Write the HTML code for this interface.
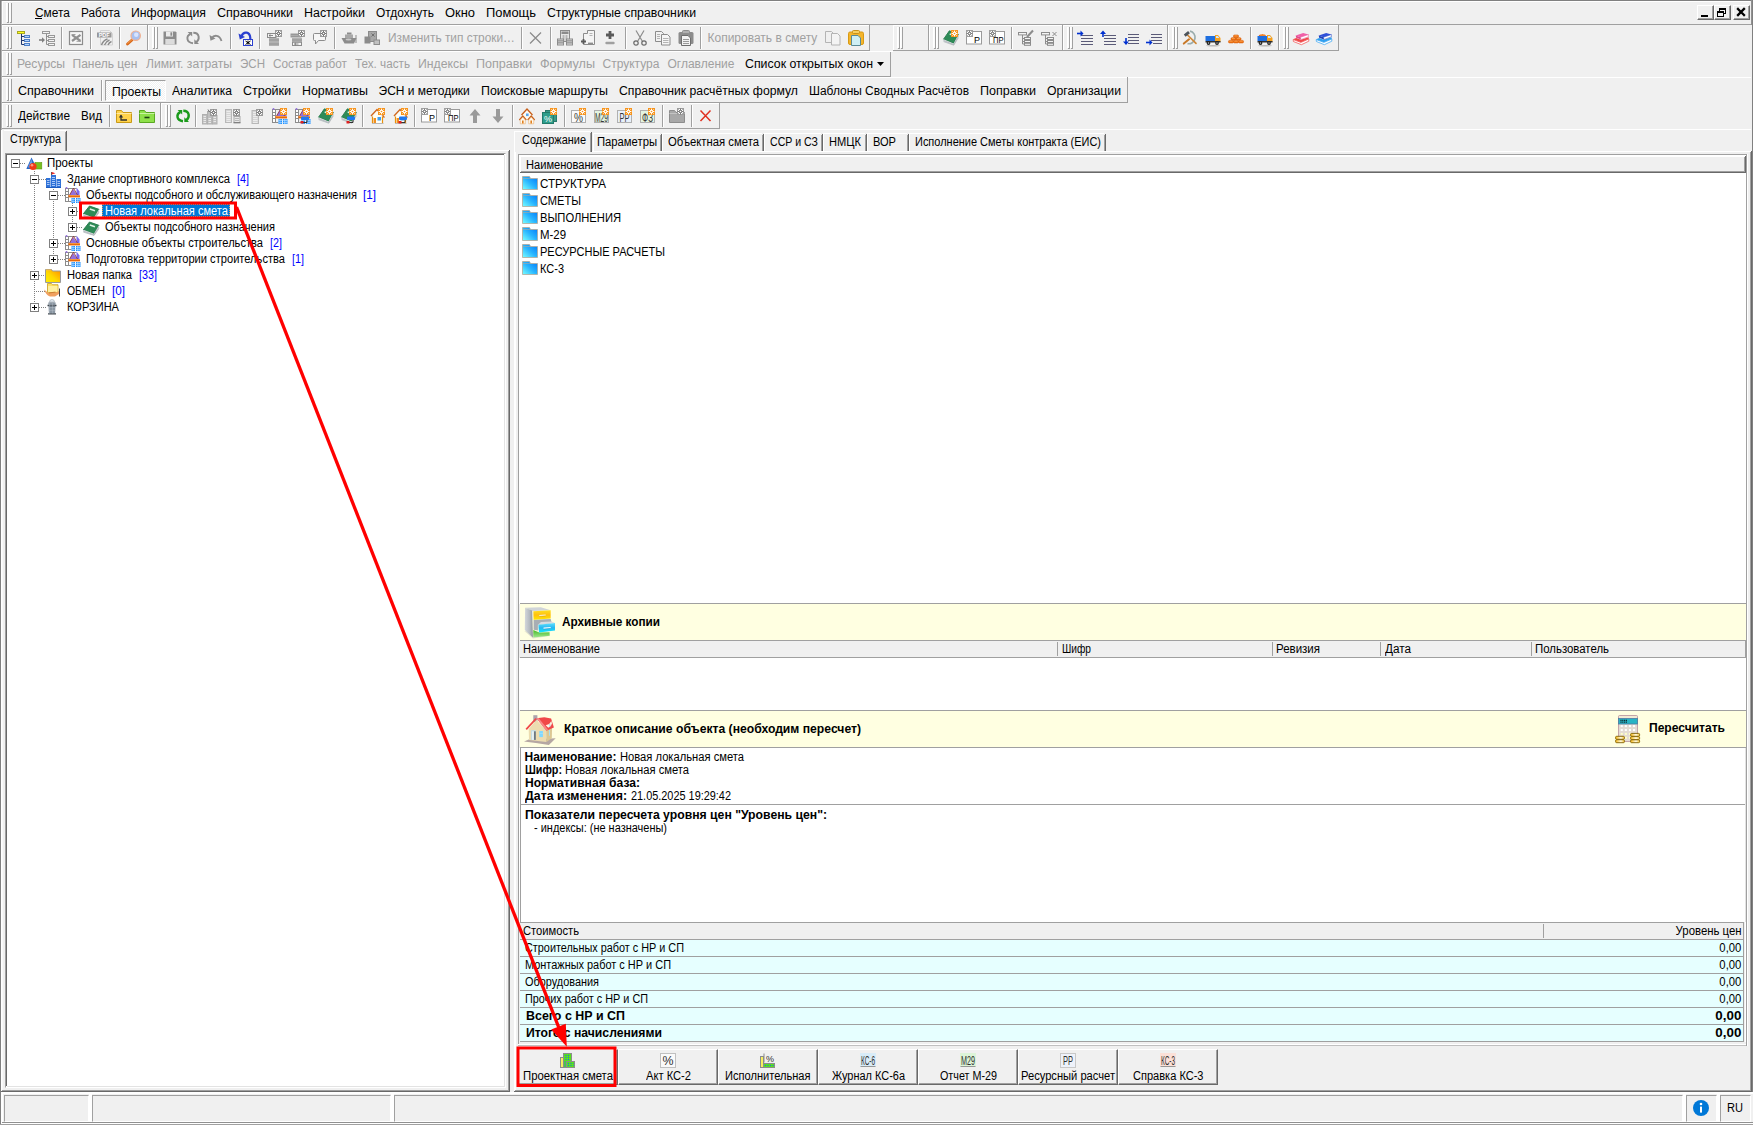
<!DOCTYPE html>
<html lang="ru"><head><meta charset="utf-8"><title>Смета</title><style>
html,body{margin:0;padding:0}
body{width:1753px;height:1125px;overflow:hidden;background:#f0f0f0;position:relative;
 font-family:"Liberation Sans",sans-serif;}
body>div,body>span,body>svg{position:absolute;display:block}
.t{white-space:pre;margin:0;padding:0}
svg{overflow:visible}
</style></head>
<body>
<div style="left:0px;top:0px;width:1px;height:1125px;background:#808080;"></div>
<div style="left:1px;top:0px;width:1px;height:130px;background:#b0b0b0;"></div>
<div style="left:0px;top:0px;width:1753px;height:1px;background:#808080;"></div>
<div style="left:1752px;top:0px;width:1px;height:1092px;background:#808080;"></div>
<div style="left:1751px;top:0px;width:1px;height:25px;background:#909090;"></div>
<div style="left:1750px;top:151px;width:1px;height:941px;background:#a0a0a0;"></div>
<div style="left:1751px;top:151px;width:1px;height:941px;background:#696969;"></div>
<div style="left:2px;top:1px;width:1748px;height:1px;background:#fff;"></div>
<div style="left:2px;top:1px;width:1px;height:23px;background:#fff;"></div>
<div style="left:2px;top:24px;width:1749px;height:1px;background:#a0a0a0;"></div>
<div style="left:1750px;top:1px;width:1px;height:24px;background:#a0a0a0;"></div>
<div style="left:6px;top:3px;width:1px;height:19px;background:#fff;"></div>
<div style="left:7px;top:3px;width:1px;height:19px;background:#fafafa;"></div>
<div style="left:8px;top:3px;width:1px;height:20px;background:#a0a0a0;"></div>
<div style="left:7px;top:22px;width:2px;height:1px;background:#a0a0a0;"></div>
<div style="left:9px;top:3px;width:1px;height:19px;background:#fff;"></div>
<div style="left:10px;top:3px;width:1px;height:19px;background:#fafafa;"></div>
<div style="left:11px;top:3px;width:1px;height:20px;background:#a0a0a0;"></div>
<div style="left:10px;top:22px;width:2px;height:1px;background:#a0a0a0;"></div>
<div style="left:1750px;top:1px;width:1px;height:23px;background:#f0f0f0;"></div>
<span id="t0" class="t " style="top:1.0px;font-size:12px;line-height:24px;height:24px;left:34.5px;transform-origin:0 0;transform:scaleX(0.9933);">Смета</span>
<span id="t1" class="t " style="top:1.0px;font-size:12px;line-height:24px;height:24px;left:80.5px;transform-origin:0 0;transform:scaleX(0.9846);">Работа</span>
<span id="t2" class="t " style="top:1.0px;font-size:12px;line-height:24px;height:24px;left:130.5px;transform-origin:0 0;transform:scaleX(1.0206);">Информация</span>
<span id="t3" class="t " style="top:1.0px;font-size:12px;line-height:24px;height:24px;left:216.5px;transform-origin:0 0;transform:scaleX(1.0453);">Справочники</span>
<span id="t4" class="t " style="top:1.0px;font-size:12px;line-height:24px;height:24px;left:303.5px;transform-origin:0 0;transform:scaleX(1.0366);">Настройки</span>
<span id="t5" class="t " style="top:1.0px;font-size:12px;line-height:24px;height:24px;left:375.5px;transform-origin:0 0;transform:scaleX(0.9938);">Отдохнуть</span>
<span id="t6" class="t " style="top:1.0px;font-size:12px;line-height:24px;height:24px;left:444.5px;transform-origin:0 0;transform:scaleX(1.0756);">Окно</span>
<span id="t7" class="t " style="top:1.0px;font-size:12px;line-height:24px;height:24px;left:485.5px;transform-origin:0 0;transform:scaleX(1.0785);">Помощь</span>
<span id="t8" class="t " style="top:1.0px;font-size:12px;line-height:24px;height:24px;left:546.5px;transform-origin:0 0;transform:scaleX(1.0237);">Структурные справочники</span>
<div style="left:35px;top:18px;width:7px;height:1px;background:#000;"></div>
<div style="left:1697px;top:5px;width:17px;height:15px;background:#f0f0f0;border-top:1px solid #fff;border-left:1px solid #fff;border-right:1px solid #696969;border-bottom:1px solid #696969;box-sizing:border-box;"></div>
<div style="left:1712px;top:6px;width:1px;height:13px;background:#a0a0a0;"></div>
<div style="left:1698px;top:18px;width:15px;height:1px;background:#a0a0a0;"></div>
<div style="left:1701px;top:15px;width:7px;height:2px;background:#000;"></div>
<div style="left:1714px;top:5px;width:17px;height:15px;background:#f0f0f0;border-top:1px solid #fff;border-left:1px solid #fff;border-right:1px solid #696969;border-bottom:1px solid #696969;box-sizing:border-box;"></div>
<div style="left:1729px;top:6px;width:1px;height:13px;background:#a0a0a0;"></div>
<div style="left:1715px;top:18px;width:15px;height:1px;background:#a0a0a0;"></div>
<svg style="left:1714px;top:5px" width="16" height="15" viewBox="0 0 16 15"><g shape-rendering="crispEdges"><rect x="5" y="3" width="7" height="2" fill="#000"/><rect x="5" y="5" width="1" height="1" fill="#000"/><rect x="11" y="5" width="1" height="4" fill="#000"/><rect x="10" y="8" width="1" height="1" fill="#000"/><rect x="3" y="6" width="7" height="2" fill="#000"/><rect x="3" y="8" width="1" height="4" fill="#000"/><rect x="9" y="8" width="1" height="4" fill="#000"/><rect x="3" y="11" width="7" height="1" fill="#000"/></g></svg>
<div style="left:1733px;top:5px;width:17px;height:15px;background:#f0f0f0;border-top:1px solid #fff;border-left:1px solid #fff;border-right:1px solid #696969;border-bottom:1px solid #696969;box-sizing:border-box;"></div>
<div style="left:1748px;top:6px;width:1px;height:13px;background:#a0a0a0;"></div>
<div style="left:1734px;top:18px;width:15px;height:1px;background:#a0a0a0;"></div>
<svg style="left:1733px;top:5px" width="16" height="15" viewBox="0 0 16 15"><path d="M5 4l6 6M11 4l-6 6" stroke="#000" stroke-width="2.300" stroke-linecap="square"/></svg>
<div style="left:2px;top:25px;width:145px;height:1px;background:#fff;"></div>
<div style="left:2px;top:25px;width:1px;height:25px;background:#fff;"></div>
<div style="left:2px;top:50px;width:146px;height:1px;background:#a0a0a0;"></div>
<div style="left:147px;top:25px;width:1px;height:26px;background:#a0a0a0;"></div>
<div style="left:6px;top:27px;width:1px;height:21px;background:#fff;"></div>
<div style="left:7px;top:27px;width:1px;height:21px;background:#fafafa;"></div>
<div style="left:8px;top:27px;width:1px;height:22px;background:#a0a0a0;"></div>
<div style="left:7px;top:48px;width:2px;height:1px;background:#a0a0a0;"></div>
<div style="left:9px;top:27px;width:1px;height:21px;background:#fff;"></div>
<div style="left:10px;top:27px;width:1px;height:21px;background:#fafafa;"></div>
<div style="left:11px;top:27px;width:1px;height:22px;background:#a0a0a0;"></div>
<div style="left:10px;top:48px;width:2px;height:1px;background:#a0a0a0;"></div>
<div style="left:148px;top:25px;width:721px;height:1px;background:#fff;"></div>
<div style="left:148px;top:25px;width:1px;height:25px;background:#fff;"></div>
<div style="left:148px;top:50px;width:722px;height:1px;background:#a0a0a0;"></div>
<div style="left:869px;top:25px;width:1px;height:26px;background:#a0a0a0;"></div>
<div style="left:152px;top:27px;width:1px;height:21px;background:#fff;"></div>
<div style="left:153px;top:27px;width:1px;height:21px;background:#fafafa;"></div>
<div style="left:154px;top:27px;width:1px;height:22px;background:#a0a0a0;"></div>
<div style="left:153px;top:48px;width:2px;height:1px;background:#a0a0a0;"></div>
<div style="left:155px;top:27px;width:1px;height:21px;background:#fff;"></div>
<div style="left:156px;top:27px;width:1px;height:21px;background:#fafafa;"></div>
<div style="left:157px;top:27px;width:1px;height:22px;background:#a0a0a0;"></div>
<div style="left:156px;top:48px;width:2px;height:1px;background:#a0a0a0;"></div>
<div style="left:893px;top:25px;width:35px;height:1px;background:#fff;"></div>
<div style="left:893px;top:25px;width:1px;height:25px;background:#fff;"></div>
<div style="left:893px;top:50px;width:36px;height:1px;background:#a0a0a0;"></div>
<div style="left:928px;top:25px;width:1px;height:26px;background:#a0a0a0;"></div>
<div style="left:897px;top:27px;width:1px;height:21px;background:#fff;"></div>
<div style="left:898px;top:27px;width:1px;height:21px;background:#fafafa;"></div>
<div style="left:899px;top:27px;width:1px;height:22px;background:#a0a0a0;"></div>
<div style="left:898px;top:48px;width:2px;height:1px;background:#a0a0a0;"></div>
<div style="left:900px;top:27px;width:1px;height:21px;background:#fff;"></div>
<div style="left:901px;top:27px;width:1px;height:21px;background:#fafafa;"></div>
<div style="left:902px;top:27px;width:1px;height:22px;background:#a0a0a0;"></div>
<div style="left:901px;top:48px;width:2px;height:1px;background:#a0a0a0;"></div>
<div style="left:929px;top:25px;width:133px;height:1px;background:#fff;"></div>
<div style="left:929px;top:25px;width:1px;height:25px;background:#fff;"></div>
<div style="left:929px;top:50px;width:134px;height:1px;background:#a0a0a0;"></div>
<div style="left:1062px;top:25px;width:1px;height:26px;background:#a0a0a0;"></div>
<div style="left:933px;top:27px;width:1px;height:21px;background:#fff;"></div>
<div style="left:934px;top:27px;width:1px;height:21px;background:#fafafa;"></div>
<div style="left:935px;top:27px;width:1px;height:22px;background:#a0a0a0;"></div>
<div style="left:934px;top:48px;width:2px;height:1px;background:#a0a0a0;"></div>
<div style="left:936px;top:27px;width:1px;height:21px;background:#fff;"></div>
<div style="left:937px;top:27px;width:1px;height:21px;background:#fafafa;"></div>
<div style="left:938px;top:27px;width:1px;height:22px;background:#a0a0a0;"></div>
<div style="left:937px;top:48px;width:2px;height:1px;background:#a0a0a0;"></div>
<div style="left:1063px;top:25px;width:104px;height:1px;background:#fff;"></div>
<div style="left:1063px;top:25px;width:1px;height:25px;background:#fff;"></div>
<div style="left:1063px;top:50px;width:105px;height:1px;background:#a0a0a0;"></div>
<div style="left:1167px;top:25px;width:1px;height:26px;background:#a0a0a0;"></div>
<div style="left:1067px;top:27px;width:1px;height:21px;background:#fff;"></div>
<div style="left:1068px;top:27px;width:1px;height:21px;background:#fafafa;"></div>
<div style="left:1069px;top:27px;width:1px;height:22px;background:#a0a0a0;"></div>
<div style="left:1068px;top:48px;width:2px;height:1px;background:#a0a0a0;"></div>
<div style="left:1070px;top:27px;width:1px;height:21px;background:#fff;"></div>
<div style="left:1071px;top:27px;width:1px;height:21px;background:#fafafa;"></div>
<div style="left:1072px;top:27px;width:1px;height:22px;background:#a0a0a0;"></div>
<div style="left:1071px;top:48px;width:2px;height:1px;background:#a0a0a0;"></div>
<div style="left:1168px;top:25px;width:110px;height:1px;background:#fff;"></div>
<div style="left:1168px;top:25px;width:1px;height:25px;background:#fff;"></div>
<div style="left:1168px;top:50px;width:111px;height:1px;background:#a0a0a0;"></div>
<div style="left:1278px;top:25px;width:1px;height:26px;background:#a0a0a0;"></div>
<div style="left:1172px;top:27px;width:1px;height:21px;background:#fff;"></div>
<div style="left:1173px;top:27px;width:1px;height:21px;background:#fafafa;"></div>
<div style="left:1174px;top:27px;width:1px;height:22px;background:#a0a0a0;"></div>
<div style="left:1173px;top:48px;width:2px;height:1px;background:#a0a0a0;"></div>
<div style="left:1175px;top:27px;width:1px;height:21px;background:#fff;"></div>
<div style="left:1176px;top:27px;width:1px;height:21px;background:#fafafa;"></div>
<div style="left:1177px;top:27px;width:1px;height:22px;background:#a0a0a0;"></div>
<div style="left:1176px;top:48px;width:2px;height:1px;background:#a0a0a0;"></div>
<div style="left:1279px;top:25px;width:59px;height:1px;background:#fff;"></div>
<div style="left:1279px;top:25px;width:1px;height:25px;background:#fff;"></div>
<div style="left:1279px;top:50px;width:60px;height:1px;background:#a0a0a0;"></div>
<div style="left:1338px;top:25px;width:1px;height:26px;background:#a0a0a0;"></div>
<div style="left:1283px;top:27px;width:1px;height:21px;background:#fff;"></div>
<div style="left:1284px;top:27px;width:1px;height:21px;background:#fafafa;"></div>
<div style="left:1285px;top:27px;width:1px;height:22px;background:#a0a0a0;"></div>
<div style="left:1284px;top:48px;width:2px;height:1px;background:#a0a0a0;"></div>
<div style="left:1286px;top:27px;width:1px;height:21px;background:#fff;"></div>
<div style="left:1287px;top:27px;width:1px;height:21px;background:#fafafa;"></div>
<div style="left:1288px;top:27px;width:1px;height:22px;background:#a0a0a0;"></div>
<div style="left:1287px;top:48px;width:2px;height:1px;background:#a0a0a0;"></div>
<div style="left:61px;top:27px;width:1px;height:22px;background:#a0a0a0;"></div>
<div style="left:62px;top:27px;width:1px;height:22px;background:#fff;"></div>
<div style="left:90px;top:27px;width:1px;height:22px;background:#a0a0a0;"></div>
<div style="left:91px;top:27px;width:1px;height:22px;background:#fff;"></div>
<div style="left:119px;top:27px;width:1px;height:22px;background:#a0a0a0;"></div>
<div style="left:120px;top:27px;width:1px;height:22px;background:#fff;"></div>
<div style="left:230px;top:27px;width:1px;height:22px;background:#a0a0a0;"></div>
<div style="left:231px;top:27px;width:1px;height:22px;background:#fff;"></div>
<div style="left:259px;top:27px;width:1px;height:22px;background:#a0a0a0;"></div>
<div style="left:260px;top:27px;width:1px;height:22px;background:#fff;"></div>
<div style="left:334px;top:27px;width:1px;height:22px;background:#a0a0a0;"></div>
<div style="left:335px;top:27px;width:1px;height:22px;background:#fff;"></div>
<div style="left:521px;top:27px;width:1px;height:22px;background:#a0a0a0;"></div>
<div style="left:522px;top:27px;width:1px;height:22px;background:#fff;"></div>
<div style="left:550px;top:27px;width:1px;height:22px;background:#a0a0a0;"></div>
<div style="left:551px;top:27px;width:1px;height:22px;background:#fff;"></div>
<div style="left:625px;top:27px;width:1px;height:22px;background:#a0a0a0;"></div>
<div style="left:626px;top:27px;width:1px;height:22px;background:#fff;"></div>
<div style="left:700px;top:27px;width:1px;height:22px;background:#a0a0a0;"></div>
<div style="left:701px;top:27px;width:1px;height:22px;background:#fff;"></div>
<div style="left:1011px;top:27px;width:1px;height:22px;background:#a0a0a0;"></div>
<div style="left:1012px;top:27px;width:1px;height:22px;background:#fff;"></div>
<div style="left:1250px;top:27px;width:1px;height:22px;background:#a0a0a0;"></div>
<div style="left:1251px;top:27px;width:1px;height:22px;background:#fff;"></div>
<span id="t9" class="t " style="top:26.0px;font-size:12px;line-height:24px;height:24px;color:#a0a0a0;left:387.5px;transform-origin:0 0;transform:scaleX(0.9899);">Изменить тип строки…</span>
<span id="t10" class="t " style="top:26.0px;font-size:12px;line-height:24px;height:24px;color:#a0a0a0;left:707.5px;transform-origin:0 0;">Копировать в смету</span>
<div style="left:2px;top:51px;width:888px;height:1px;background:#fff;"></div>
<div style="left:2px;top:51px;width:1px;height:25px;background:#fff;"></div>
<div style="left:2px;top:76px;width:889px;height:1px;background:#a0a0a0;"></div>
<div style="left:890px;top:51px;width:1px;height:26px;background:#a0a0a0;"></div>
<div style="left:6px;top:53px;width:1px;height:21px;background:#fff;"></div>
<div style="left:7px;top:53px;width:1px;height:21px;background:#fafafa;"></div>
<div style="left:8px;top:53px;width:1px;height:22px;background:#a0a0a0;"></div>
<div style="left:7px;top:74px;width:2px;height:1px;background:#a0a0a0;"></div>
<div style="left:9px;top:53px;width:1px;height:21px;background:#fff;"></div>
<div style="left:10px;top:53px;width:1px;height:21px;background:#fafafa;"></div>
<div style="left:11px;top:53px;width:1px;height:22px;background:#a0a0a0;"></div>
<div style="left:10px;top:74px;width:2px;height:1px;background:#a0a0a0;"></div>
<div style="left:870px;top:51px;width:23px;height:1px;background:#fff;"></div>
<span id="t11" class="t " style="top:52.0px;font-size:12px;line-height:24px;height:24px;color:#a0a0a0;left:16.5px;transform-origin:0 0;transform:scaleX(1.0142);">Ресурсы</span>
<span id="t12" class="t " style="top:52.0px;font-size:12px;line-height:24px;height:24px;color:#a0a0a0;left:72.5px;transform-origin:0 0;">Панель цен</span>
<span id="t13" class="t " style="top:52.0px;font-size:12px;line-height:24px;height:24px;color:#a0a0a0;left:145.5px;transform-origin:0 0;transform:scaleX(1.0120);">Лимит. затраты</span>
<span id="t14" class="t " style="top:52.0px;font-size:12px;line-height:24px;height:24px;color:#a0a0a0;left:239.5px;transform-origin:0 0;transform:scaleX(0.9627);">ЭСН</span>
<span id="t15" class="t " style="top:52.0px;font-size:12px;line-height:24px;height:24px;color:#a0a0a0;left:272.5px;transform-origin:0 0;transform:scaleX(0.9838);">Состав работ</span>
<span id="t16" class="t " style="top:52.0px;font-size:12px;line-height:24px;height:24px;color:#a0a0a0;left:354.5px;transform-origin:0 0;transform:scaleX(0.9748);">Тех. часть</span>
<span id="t17" class="t " style="top:52.0px;font-size:12px;line-height:24px;height:24px;color:#a0a0a0;left:417.5px;transform-origin:0 0;transform:scaleX(1.0217);">Индексы</span>
<span id="t18" class="t " style="top:52.0px;font-size:12px;line-height:24px;height:24px;color:#a0a0a0;left:475.5px;transform-origin:0 0;transform:scaleX(1.0470);">Поправки</span>
<span id="t19" class="t " style="top:52.0px;font-size:12px;line-height:24px;height:24px;color:#a0a0a0;left:539.5px;transform-origin:0 0;transform:scaleX(1.0533);">Формулы</span>
<span id="t20" class="t " style="top:52.0px;font-size:12px;line-height:24px;height:24px;color:#a0a0a0;left:602.5px;transform-origin:0 0;">Структура</span>
<span id="t21" class="t " style="top:52.0px;font-size:12px;line-height:24px;height:24px;color:#a0a0a0;left:667.5px;transform-origin:0 0;">Оглавление</span>
<span id="t22" class="t " style="top:52.0px;font-size:12px;line-height:24px;height:24px;left:744.5px;transform-origin:0 0;transform:scaleX(1.0279);">Список открытых окон</span>
<svg style="left:877px;top:62px" width="7" height="4" viewBox="0 0 7 4"><path d="M0 0h7l-3.5 4z" fill="#000"/></svg>
<div style="left:2px;top:77px;width:1125px;height:1px;background:#fff;"></div>
<div style="left:2px;top:77px;width:1px;height:25px;background:#fff;"></div>
<div style="left:2px;top:102px;width:1126px;height:1px;background:#a0a0a0;"></div>
<div style="left:1127px;top:77px;width:1px;height:26px;background:#a0a0a0;"></div>
<div style="left:6px;top:79px;width:1px;height:21px;background:#fff;"></div>
<div style="left:7px;top:79px;width:1px;height:21px;background:#fafafa;"></div>
<div style="left:8px;top:79px;width:1px;height:22px;background:#a0a0a0;"></div>
<div style="left:7px;top:100px;width:2px;height:1px;background:#a0a0a0;"></div>
<div style="left:9px;top:79px;width:1px;height:21px;background:#fff;"></div>
<div style="left:10px;top:79px;width:1px;height:21px;background:#fafafa;"></div>
<div style="left:11px;top:79px;width:1px;height:22px;background:#a0a0a0;"></div>
<div style="left:10px;top:100px;width:2px;height:1px;background:#a0a0a0;"></div>
<div style="left:1128px;top:77px;width:623px;height:1px;background:#fff;"></div>
<span id="t23" class="t " style="top:79.0px;font-size:12px;line-height:24px;height:24px;left:17.5px;transform-origin:0 0;transform:scaleX(1.0453);">Справочники</span>
<div style="left:101px;top:80px;width:1px;height:21px;background:#a0a0a0;"></div>
<div style="left:102px;top:80px;width:1px;height:21px;background:#fff;"></div>
<div style="left:105px;top:80px;width:61px;height:21px;background:repeating-conic-gradient(#fff 0 25%,#f0f0f0 0 50%) 0 0/2px 2px;border-top:1px solid #a0a0a0;border-left:1px solid #a0a0a0;border-right:1px solid #fff;border-bottom:1px solid #fff;box-sizing:border-box;"></div>
<span id="t24" class="t " style="top:80.0px;font-size:12px;line-height:24px;height:24px;left:111.5px;transform-origin:0 0;transform:scaleX(1.0175);">Проекты</span>
<span id="t25" class="t " style="top:79.0px;font-size:12px;line-height:24px;height:24px;left:171.5px;transform-origin:0 0;transform:scaleX(1.0100);">Аналитика</span>
<span id="t26" class="t " style="top:79.0px;font-size:12px;line-height:24px;height:24px;left:242.5px;transform-origin:0 0;transform:scaleX(1.0396);">Стройки</span>
<span id="t27" class="t " style="top:79.0px;font-size:12px;line-height:24px;height:24px;left:301.5px;transform-origin:0 0;transform:scaleX(1.0333);">Нормативы</span>
<span id="t28" class="t " style="top:79.0px;font-size:12px;line-height:24px;height:24px;left:378.5px;transform-origin:0 0;">ЭСН и методики</span>
<span id="t29" class="t " style="top:79.0px;font-size:12px;line-height:24px;height:24px;left:480.5px;transform-origin:0 0;transform:scaleX(1.0329);">Поисковые маршруты</span>
<span id="t30" class="t " style="top:79.0px;font-size:12px;line-height:24px;height:24px;left:618.5px;transform-origin:0 0;transform:scaleX(1.0176);">Справочник расчётных формул</span>
<span id="t31" class="t " style="top:79.0px;font-size:12px;line-height:24px;height:24px;left:808.5px;transform-origin:0 0;transform:scaleX(0.9950);">Шаблоны Сводных Расчётов</span>
<span id="t32" class="t " style="top:79.0px;font-size:12px;line-height:24px;height:24px;left:979.5px;transform-origin:0 0;transform:scaleX(1.0470);">Поправки</span>
<span id="t33" class="t " style="top:79.0px;font-size:12px;line-height:24px;height:24px;left:1046.5px;transform-origin:0 0;transform:scaleX(1.0194);">Организации</span>
<div style="left:2px;top:103px;width:158px;height:1px;background:#fff;"></div>
<div style="left:2px;top:103px;width:1px;height:25px;background:#fff;"></div>
<div style="left:2px;top:128px;width:159px;height:1px;background:#a0a0a0;"></div>
<div style="left:160px;top:103px;width:1px;height:26px;background:#a0a0a0;"></div>
<div style="left:6px;top:105px;width:1px;height:21px;background:#fff;"></div>
<div style="left:7px;top:105px;width:1px;height:21px;background:#fafafa;"></div>
<div style="left:8px;top:105px;width:1px;height:22px;background:#a0a0a0;"></div>
<div style="left:7px;top:126px;width:2px;height:1px;background:#a0a0a0;"></div>
<div style="left:9px;top:105px;width:1px;height:21px;background:#fff;"></div>
<div style="left:10px;top:105px;width:1px;height:21px;background:#fafafa;"></div>
<div style="left:11px;top:105px;width:1px;height:22px;background:#a0a0a0;"></div>
<div style="left:10px;top:126px;width:2px;height:1px;background:#a0a0a0;"></div>
<div style="left:161px;top:103px;width:558px;height:1px;background:#fff;"></div>
<div style="left:161px;top:103px;width:1px;height:25px;background:#fff;"></div>
<div style="left:161px;top:128px;width:559px;height:1px;background:#a0a0a0;"></div>
<div style="left:719px;top:103px;width:1px;height:26px;background:#a0a0a0;"></div>
<div style="left:165px;top:105px;width:1px;height:21px;background:#fff;"></div>
<div style="left:166px;top:105px;width:1px;height:21px;background:#fafafa;"></div>
<div style="left:167px;top:105px;width:1px;height:22px;background:#a0a0a0;"></div>
<div style="left:166px;top:126px;width:2px;height:1px;background:#a0a0a0;"></div>
<div style="left:168px;top:105px;width:1px;height:21px;background:#fff;"></div>
<div style="left:169px;top:105px;width:1px;height:21px;background:#fafafa;"></div>
<div style="left:170px;top:105px;width:1px;height:22px;background:#a0a0a0;"></div>
<div style="left:169px;top:126px;width:2px;height:1px;background:#a0a0a0;"></div>
<div style="left:720px;top:129px;width:1031px;height:1px;background:#fff;"></div>
<span id="t34" class="t " style="top:104.0px;font-size:12px;line-height:24px;height:24px;left:17.5px;transform-origin:0 0;transform:scaleX(0.9855);">Действие</span>
<span id="t35" class="t " style="top:104.0px;font-size:12px;line-height:24px;height:24px;left:80.5px;transform-origin:0 0;transform:scaleX(0.9669);">Вид</span>
<div style="left:109px;top:105px;width:1px;height:22px;background:#a0a0a0;"></div>
<div style="left:110px;top:105px;width:1px;height:22px;background:#fff;"></div>
<div style="left:195px;top:105px;width:1px;height:22px;background:#a0a0a0;"></div>
<div style="left:196px;top:105px;width:1px;height:22px;background:#fff;"></div>
<div style="left:362px;top:105px;width:1px;height:22px;background:#a0a0a0;"></div>
<div style="left:363px;top:105px;width:1px;height:22px;background:#fff;"></div>
<div style="left:414px;top:105px;width:1px;height:22px;background:#a0a0a0;"></div>
<div style="left:415px;top:105px;width:1px;height:22px;background:#fff;"></div>
<div style="left:512px;top:105px;width:1px;height:22px;background:#a0a0a0;"></div>
<div style="left:513px;top:105px;width:1px;height:22px;background:#fff;"></div>
<div style="left:564px;top:105px;width:1px;height:22px;background:#a0a0a0;"></div>
<div style="left:565px;top:105px;width:1px;height:22px;background:#fff;"></div>
<div style="left:662px;top:105px;width:1px;height:22px;background:#a0a0a0;"></div>
<div style="left:663px;top:105px;width:1px;height:22px;background:#fff;"></div>
<div style="left:691px;top:105px;width:1px;height:22px;background:#a0a0a0;"></div>
<div style="left:692px;top:105px;width:1px;height:22px;background:#fff;"></div>
<svg style="left:17px;top:30px" width="16" height="16" viewBox="0 0 16 16"><path d="M4.500 4v10.500h3M4.500 6.500h3M4.500 10.500h3" fill="none" stroke="#203870"/><rect x="0.500" y="1.500" width="7" height="2" fill="#ffff20" stroke="#a8a820"/><g fill="#b0d4ff" stroke="#5080c8"><rect x="7.500" y="5.500" width="5" height="2"/><rect x="7.500" y="9.500" width="5" height="2"/><rect x="7.500" y="13.500" width="5" height="2"/></g></svg>
<svg style="left:39px;top:30px" width="16" height="16" viewBox="0 0 16 16"><path d="M7.500 4v10.500h2M7.500 6.500h2M7.500 10.500h2" fill="none" stroke="#909090"/><g fill="#f4f4f4" stroke="#989898"><rect x="3.500" y="1.500" width="7" height="2"/><rect x="9.500" y="5.500" width="6" height="2"/><rect x="9.500" y="9.500" width="6" height="2"/><rect x="9.500" y="13.500" width="6" height="2"/></g><path d="M0 10h3.500" stroke="#808080" stroke-width="1.600"/><path d="M3 7.300l3 2.700-3 2.700z" fill="#808080"/></svg>
<svg style="left:68px;top:30px" width="16" height="16" viewBox="0 0 16 16"><rect x="1.500" y="1.500" width="13" height="13" fill="#f6f6f6" stroke="#8c8c8c" stroke-width="1.200"/><path d="M4 4.800l8.500 6.200M12.500 4.800L4 11" stroke="#909090" stroke-width="2.200"/><path d="M3.500 4.500h4M8.500 11.300h4.500" stroke="#a0a0a0" stroke-width="1"/></svg>
<svg style="left:97px;top:30px" width="16" height="16" viewBox="0 0 16 16"><path d="M3.500 0.500h9l3 3v11.500h-12z" fill="#f0f0f0" stroke="#d4d4d4"/><rect x="0" y="2.500" width="14.500" height="5" fill="#989898"/><text x="7.200" y="7" font-size="5.500" font-weight="bold" font-family="Liberation Sans,sans-serif" fill="#fff" text-anchor="middle" textLength="11" lengthAdjust="spacingAndGlyphs">PDF</text><path d="M4.500 15c1-3 3-5 6-6M7.500 15c1-2.500 2.500-4 5-5M11 15c.600-1.600 1.600-2.800 3.500-3.500" stroke="#8a8a8a" stroke-width="1.400" fill="none"/></svg>
<svg style="left:126px;top:30px" width="16" height="16" viewBox="0 0 16 16"><path d="M6 10L1.500 14" stroke="#d86818" stroke-width="2.800" stroke-linecap="round"/><path d="M6 9.600L1.800 13.300" stroke="#f8a050" stroke-width=".900" stroke-linecap="round"/><circle cx="9.700" cy="5.700" r="4.700" fill="#a8c0f0" stroke="#f0b090" stroke-width="1.200"/><circle cx="10.200" cy="4.800" r="2.200" fill="#d8e4ff"/></svg>
<svg style="left:162px;top:30px" width="16" height="16" viewBox="0 0 16 16"><path d="M1.5 1.5h12l1 1v12h-13z" fill="#8c8c8c"/><rect x="4" y="1.5" width="7" height="5" fill="#ececec"/><rect x="8.4" y="2.3" width="1.8" height="3.4" fill="#8c8c8c"/><rect x="3.3" y="9" width="9.4" height="5.5" fill="#dcdcdc"/></svg>
<svg style="left:185px;top:30px" width="16" height="16" viewBox="0 0 16 16"><path d="M5.300 4.200C1.200 6 1 12.300 8 13.200" fill="none" stroke="#8c8c8c" stroke-width="1.9"/><path d="M8.300 2.800C14.800 2.800 15 9.500 11.300 12.300" fill="none" stroke="#8c8c8c" stroke-width="1.9"/><path d="M2.600 2h4.600v4.600z" fill="#8c8c8c"/><path d="M9.300 9.300v4.700h4.700z" fill="#8c8c8c"/></svg>
<svg style="left:208px;top:30px" width="16" height="16" viewBox="0 0 16 16"><path d="M3.5 8.5C6 4.5 11.5 4.5 13.5 11" fill="none" stroke="#8c8c8c" stroke-width="1.8"/><path d="M1.5 5l1 5.8 5-2.4z" fill="#8c8c8c"/></svg>
<svg style="left:238px;top:30px" width="16" height="16" viewBox="0 0 16 16"><path d="M3.5 6C6 0.5 12 2 12.3 8v1.5" fill="none" stroke="#2a3fd0" stroke-width="2.2"/><path d="M0.5 3.5l1.3 6L7 7z" fill="#2a3fd0"/><rect x="5.5" y="9.5" width="9" height="6" fill="#fff" stroke="#2a3fd0"/><path d="M7.5 11l5 3.5M12.5 11l-5 3.5M10 10.6v4" stroke="#000" stroke-width="1"/></svg>
<svg style="left:267px;top:30px" width="16" height="16" viewBox="0 0 16 16"><rect x="0.500" y="3.500" width="8.500" height="4" fill="#f4f4f4" stroke="#8c8c8c"/><path d="M2 5.500h4M3.500 4.300l-1.500 1.200 1.500 1.200" stroke="#707070" stroke-width=".800" fill="none"/><rect x="2" y="8.300" width="10" height="3.400" fill="#989898"/><rect x="2" y="12.300" width="10" height="3.400" fill="#989898"/><path d="M2 10h10M2 14h10" stroke="#b4b4b4" stroke-width=".700"/><rect x="8.5" y="0.5" width="6" height="6" fill="#ffffff" stroke="#9c9c9c" stroke-width="1"/><path d="M12.70 3.50L14.40 3.50M12.35 4.35L13.55 5.55M11.50 4.70L11.50 6.40M10.65 4.35L9.45 5.55M10.30 3.50L8.60 3.50M10.65 2.65L9.45 1.45M11.50 2.30L11.50 0.60M12.35 2.65L13.55 1.45" stroke="#787878" stroke-width="1"/><circle cx="11.5" cy="3.5" r="1.700" fill="#787878"/><circle cx="11.5" cy="3.5" r=".800" fill="#ffffff"/></svg>
<svg style="left:290px;top:30px" width="16" height="16" viewBox="0 0 16 16"><rect x="0.500" y="3.500" width="11" height="4" fill="#989898"/><rect x="2" y="8.300" width="10" height="3.400" fill="#989898"/><path d="M1 5.500h10M2 10h10" stroke="#b4b4b4" stroke-width=".700"/><rect x="2.500" y="12.300" width="9" height="3.200" fill="#f4f4f4" stroke="#8c8c8c"/><path d="M4.500 14h4M6 12.900l-1.500 1.100 1.500 1.100" stroke="#707070" stroke-width=".800" fill="none"/><rect x="8.5" y="0.5" width="6" height="6" fill="#ffffff" stroke="#9c9c9c" stroke-width="1"/><path d="M12.70 3.50L14.40 3.50M12.35 4.35L13.55 5.55M11.50 4.70L11.50 6.40M10.65 4.35L9.45 5.55M10.30 3.50L8.60 3.50M10.65 2.65L9.45 1.45M11.50 2.30L11.50 0.60M12.35 2.65L13.55 1.45" stroke="#787878" stroke-width="1"/><circle cx="11.5" cy="3.5" r="1.700" fill="#787878"/><circle cx="11.5" cy="3.5" r=".800" fill="#ffffff"/></svg>
<svg style="left:312px;top:30px" width="16" height="16" viewBox="0 0 16 16"><path d="M1.5 4.5q0-1 1-1h10q1 0 1 1v5q0 1-1 1h-6l-3 3.5v-3.5h-1q-1 0-1-1z" fill="#f6f6f6" stroke="#8c8c8c"/><rect x="8.5" y="0.5" width="6" height="6" fill="#ffffff" stroke="#9c9c9c" stroke-width="1"/><path d="M12.70 3.50L14.40 3.50M12.35 4.35L13.55 5.55M11.50 4.70L11.50 6.40M10.65 4.35L9.45 5.55M10.30 3.50L8.60 3.50M10.65 2.65L9.45 1.45M11.50 2.30L11.50 0.60M12.35 2.65L13.55 1.45" stroke="#787878" stroke-width="1"/><circle cx="11.5" cy="3.5" r="1.700" fill="#787878"/><circle cx="11.5" cy="3.5" r=".800" fill="#ffffff"/></svg>
<svg style="left:341px;top:30px" width="16" height="16" viewBox="0 0 16 16"><path d="M0.5 8h15l-2.5 5.5h-9.5z" fill="#8c8c8c"/><rect x="4" y="4.5" width="8" height="3.5" fill="#a8a8a8"/><rect x="6" y="2.5" width="4.5" height="2" fill="#8c8c8c"/><path d="M15 5v8" stroke="#8c8c8c"/><ellipse cx="7.5" cy="9.5" rx="3" ry="1" fill="#c8c8c8"/></svg>
<svg style="left:364px;top:30px" width="16" height="16" viewBox="0 0 16 16"><rect x="4.5" y="1.5" width="8" height="10" fill="#a8a8a8" stroke="#8c8c8c"/><rect x="0.5" y="6.5" width="6" height="7" fill="#8c8c8c"/><rect x="10" y="10" width="5.5" height="4.5" fill="#c0c0c0" stroke="#8c8c8c"/><path d="M7.5 3.5l3 3M10.5 3.5l-3 3" stroke="#707070"/></svg>
<svg style="left:528px;top:30px" width="16" height="16" viewBox="0 0 16 16"><path d="M2 2.5l11 11M13 2.5l-11 11" stroke="#8c8c8c" stroke-width="1.3"/></svg>
<svg style="left:557px;top:30px" width="16" height="16" viewBox="0 0 16 16"><rect x="3.5" y="0.5" width="9" height="11" fill="#e6e6e6" stroke="#8c8c8c"/><rect x="4.5" y="1.5" width="7" height="2.5" fill="#8c8c8c"/><path d="M5 6h6M5 8h6M5 10h6M6.5 5v6M9.5 5v6" stroke="#b0b0b0" stroke-width=".8"/><g fill="#e0e0e0" stroke="#8c8c8c"><rect x="0.5" y="9" width="6" height="2"/><rect x="0.5" y="11" width="6" height="2"/><rect x="0.5" y="13" width="6" height="2"/><rect x="9.5" y="9" width="6" height="2"/><rect x="9.5" y="11" width="6" height="2"/><rect x="9.5" y="13" width="6" height="2"/></g></svg>
<svg style="left:580px;top:30px" width="16" height="16" viewBox="0 0 16 16"><path d="M3.500 3.500h4v-3h7v14h-11z" fill="#f4f4f4" stroke="#8c8c8c"/><path d="M9.500 3.5h3M9.500 5.5h3" stroke="#b4b4b4"/><path d="M1 11.500h5M3.500 9v5" stroke="#5a5a5a" stroke-width="1.8"/><path d="M8 13.500h5" stroke="#8c8c8c" stroke-width="1.800"/></svg>
<svg style="left:602px;top:30px" width="16" height="16" viewBox="0 0 16 16"><path d="M8 1v8M4 5h8" stroke="#5a5a5a" stroke-width="2.800"/><path d="M4.500 13h7" stroke="#a0a0a0" stroke-width="2.400" stroke-linecap="round"/></svg>
<svg style="left:632px;top:30px" width="16" height="16" viewBox="0 0 16 16"><path d="M4 0.500l6.500 11M12 0.500L5.500 11.500" stroke="#8c8c8c" stroke-width="1.200" fill="none"/><circle cx="4" cy="13" r="2.200" fill="none" stroke="#6a6a6a" stroke-width="1.200"/><circle cx="12" cy="13" r="2.200" fill="none" stroke="#6a6a6a" stroke-width="1.200"/></svg>
<svg style="left:655px;top:30px" width="16" height="16" viewBox="0 0 16 16"><path d="M0.500 1.500h6l2 2v8h-8z" fill="#f2f2f2" stroke="#8c8c8c"/><path d="M6.500 4.500h6l2.500 2.500v8h-8.500z" fill="#f6f6f6" stroke="#8c8c8c"/><path d="M8 8.500h5.500M8 10.500h5.500M8 12.500h5.500M2 4.500h3M2 6.500h3M2 8.500h3" stroke="#b4b4b4"/></svg>
<svg style="left:678px;top:30px" width="16" height="16" viewBox="0 0 16 16"><rect x="0.500" y="2" width="15" height="12" rx="1.500" fill="#8c8c8c"/><rect x="4.500" y="0.500" width="7" height="3" rx="1" fill="#b0b0b0" stroke="#8c8c8c"/><path d="M3.500 5.500h6.500l2.500 2.500v7.500h-9z" fill="#f2f2f2" stroke="#6e6e6e"/><path d="M5 9.500h6M5 11.500h6M5 13.500h6" stroke="#9a9a9a"/></svg>
<svg style="left:825px;top:30px" width="16" height="16" viewBox="0 0 16 16"><path d="M0.500 1.500h6l2 2v9h-8z" fill="#f0f0f0" stroke="#b4b4b4"/><path d="M6.500 3.500h6l2.500 2.500v9h-8.500z" fill="#f4f4f4" stroke="#b4b4b4"/></svg>
<svg style="left:848px;top:30px" width="16" height="16" viewBox="0 0 16 16"><rect x="0.500" y="2" width="15" height="12.500" rx="1.500" fill="#f4b52c" stroke="#d89a14"/><rect x="4.500" y="0.500" width="7" height="3" rx="1" fill="#f8d060" stroke="#c89018"/><path d="M3.500 5.500h6.500l2.500 2.500v7.500h-9z" fill="#cfeff4" stroke="#5a8a96"/></svg>
<svg style="left:943px;top:30px" width="16" height="16" viewBox="0 0 16 16"><g transform="translate(-0.500,-2.200) scale(1.060,1.200)"><path d="M1 9.5L6.5 2.5L15 5.5L10.5 13z" fill="#2e8b57"/><path d="M1 9.5L6.5 2.5L15 5.5L10.5 13z" fill="none" stroke="#257a4a" stroke-width=".8"/><path d="M6.8 5.2l4.6 1.5" stroke="#dff5e8" stroke-width="1.3"/><path d="M1 9.5l9.5 3.5L15 5.5v2.8l-4.4 6.2L1 11.5z" fill="#d9dde0"/><path d="M1 10.6l9.5 3.4L15 7M1 11.5l9.6 3L15 8.3" stroke="#a9b0b5" stroke-width=".6" fill="none"/></g><rect x="8" y="0" width="7" height="7" fill="#f7941d"/><path d="M12.70 3.50L14.40 3.50M12.35 4.35L13.55 5.55M11.50 4.70L11.50 6.40M10.65 4.35L9.45 5.55M10.30 3.50L8.60 3.50M10.65 2.65L9.45 1.45M11.50 2.30L11.50 0.60M12.35 2.65L13.55 1.45" stroke="#fff" stroke-width="1"/><circle cx="11.5" cy="3.5" r="1.700" fill="#fff"/><circle cx="11.5" cy="3.5" r=".800" fill="#f7941d"/></svg>
<svg style="left:966px;top:30px" width="16" height="16" viewBox="0 0 16 16"><rect x="0.500" y="1.500" width="15" height="12.500" fill="#fff" stroke="#9a9a9a"/><rect x="0.5" y="0.5" width="6" height="6" fill="#ffffff" stroke="#a0a0a0" stroke-width="1"/><path d="M4.70 3.50L6.40 3.50M4.35 4.35L5.55 5.55M3.50 4.70L3.50 6.40M2.65 4.35L1.45 5.55M2.30 3.50L0.60 3.50M2.65 2.65L1.45 1.45M3.50 2.30L3.50 0.60M4.35 2.65L5.55 1.45" stroke="#808080" stroke-width="1"/><circle cx="3.5" cy="3.5" r="1.700" fill="#808080"/><circle cx="3.5" cy="3.5" r=".800" fill="#ffffff"/><text x="11" y="13" font-size="9" text-anchor="middle" font-family="Liberation Sans,sans-serif" fill="#000">Р</text></svg>
<svg style="left:989px;top:30px" width="16" height="16" viewBox="0 0 16 16"><rect x="0.500" y="1.500" width="15" height="12.500" fill="#fff" stroke="#9a9a9a"/><rect x="0.5" y="0.5" width="6" height="6" fill="#ffffff" stroke="#a0a0a0" stroke-width="1"/><path d="M4.70 3.50L6.40 3.50M4.35 4.35L5.55 5.55M3.50 4.70L3.50 6.40M2.65 4.35L1.45 5.55M2.30 3.50L0.60 3.50M2.65 2.65L1.45 1.45M3.50 2.30L3.50 0.60M4.35 2.65L5.55 1.45" stroke="#808080" stroke-width="1"/><circle cx="3.5" cy="3.5" r="1.700" fill="#808080"/><circle cx="3.5" cy="3.5" r=".800" fill="#ffffff"/><text x="4" y="13" font-size="8.500" font-family="Liberation Sans,sans-serif" fill="#000" textLength="10.500" lengthAdjust="spacingAndGlyphs">ПР</text></svg>
<svg style="left:1018px;top:30px" width="16" height="16" viewBox="0 0 16 16"><rect x="0.500" y="2.500" width="8" height="2.400" fill="#f4f4f4" stroke="#8c8c8c"/><path d="M4.500 5v9h2M4.500 8.500h2M4.500 11.500h2" fill="none" stroke="#8c8c8c"/><rect x="6.500" y="7.500" width="6" height="2" fill="#f4f4f4" stroke="#8c8c8c"/><rect x="6.500" y="10.500" width="6" height="2" fill="#f4f4f4" stroke="#8c8c8c"/><rect x="6.500" y="13.300" width="6" height="2" fill="#f4f4f4" stroke="#8c8c8c"/><path d="M9 7L15 0.500" stroke="#8c8c8c" stroke-width="2"/></svg>
<svg style="left:1041px;top:30px" width="16" height="16" viewBox="0 0 16 16"><rect x="0.500" y="2.500" width="8" height="2.400" fill="#f4f4f4" stroke="#8c8c8c"/><path d="M4.500 5v9h2M4.500 8.500h2M4.500 11.500h2" fill="none" stroke="#8c8c8c"/><rect x="6.500" y="7.500" width="6" height="2" fill="#f4f4f4" stroke="#8c8c8c"/><rect x="6.500" y="10.500" width="6" height="2" fill="#f4f4f4" stroke="#8c8c8c"/><rect x="6.500" y="13.300" width="6" height="2" fill="#f4f4f4" stroke="#8c8c8c"/><path d="M11.500 2l4 4M15.500 2l-4 4" stroke="#8c8c8c" stroke-width="1"/></svg>
<svg style="left:1077px;top:30px" width="16" height="16" viewBox="0 0 16 16"><path d="M4 5.500h12M4 8.500h12M4 11.500h12M4 14.500h12" stroke="#5a5a78"/><path d="M0 3.500h5" stroke="#0030d0" stroke-width="1.600"/><path d="M3.500 0.500l3 3-3 3z" fill="#0030d0"/></svg>
<svg style="left:1100px;top:30px" width="16" height="16" viewBox="0 0 16 16"><path d="M4 5.500h12M4 8.500h12M4 11.500h12M4 14.500h12" stroke="#5a5a78"/><path d="M3 2v5" stroke="#0030d0" stroke-width="1.600"/><path d="M0 4l3-3.500 3 3.500z" fill="#0030d0"/></svg>
<svg style="left:1123px;top:30px" width="16" height="16" viewBox="0 0 16 16"><path d="M5 4.500h11M5 7.500h11M5 10.500h11M5 13.500h11" stroke="#5a5a78"/><path d="M3 8v5" stroke="#0030d0" stroke-width="1.600"/><path d="M0 11.500l3 3.500 3-3.500z" fill="#0030d0"/></svg>
<svg style="left:1146px;top:30px" width="16" height="16" viewBox="0 0 16 16"><path d="M5 4.500h11M5 7.500h11M5 10.500h11M7 13.500h9" stroke="#5a5a78"/><path d="M0 12.500h4" stroke="#0030d0" stroke-width="1.600"/><path d="M3.500 9.500l3 3-3 3z" fill="#0030d0"/></svg>
<svg style="left:1182px;top:30px" width="16" height="16" viewBox="0 0 16 16"><path d="M8 1.200A6.300 6.300 0 1 1 5.500 13.600" fill="none" stroke="#9aacac" stroke-width="1.700"/><path d="M7 9.300L1.800 13.600" stroke="#c87828" stroke-width="2" stroke-linecap="round"/><path d="M5 4.500L14 13.300" stroke="#d08838" stroke-width="1.700" stroke-linecap="round"/><path d="M2.700 5.700L7 2.200" stroke="#4c545c" stroke-width="2.800"/></svg>
<svg style="left:1205px;top:30px" width="16" height="16" viewBox="0 0 16 16"><g transform="translate(0,1)"><rect x="0.500" y="5" width="9.500" height="5" fill="#1e6fe0"/><path d="M10 4h3l2.500 3v4h-5.500z" fill="#f4a020"/><path d="M11 5h1.800l1.500 2h-3.300z" fill="#cfe8ff"/><rect x="0.500" y="10" width="15" height="1.500" fill="#303030"/><circle cx="3.500" cy="12" r="1.900" fill="#202020"/><circle cx="12" cy="12" r="1.900" fill="#202020"/><circle cx="3.500" cy="12" r=".700" fill="#c0c0c0"/><circle cx="12" cy="12" r=".700" fill="#c0c0c0"/><ellipse cx="8" cy="14.800" rx="7" ry=".800" fill="#b8b8b8"/></g></svg>
<svg style="left:1228px;top:30px" width="16" height="16" viewBox="0 0 16 16"><g fill="#f07818" stroke="#d85800" stroke-width=".600"><rect x="5.500" y="5" width="5" height="2.500" rx="1"/><rect x="3" y="7.700" width="5" height="2.500" rx="1"/><rect x="8" y="7.700" width="5" height="2.500" rx="1"/><rect x="0.500" y="10.400" width="5" height="2.500" rx="1"/><rect x="5.500" y="10.400" width="5" height="2.500" rx="1"/><rect x="10.500" y="10.400" width="5" height="2.500" rx="1"/></g><path d="M6.500 5.800h3M4 8.500h3M9 8.500h3M1.500 11.200h3M6.500 11.200h3M11.500 11.200h3" stroke="#ffb060" stroke-width=".600"/></svg>
<svg style="left:1257px;top:30px" width="16" height="16" viewBox="0 0 16 16"><g transform="translate(0,1)"><path d="M1.500 5.200q1-2.200 2.500-1.500 1.500-1.500 3 0 1.500-.500 2 1.500z" fill="#e8640c"/><path d="M3 4h5" stroke="#ffb060" stroke-width=".800"/><rect x="0.500" y="5" width="9.500" height="5" fill="#1e6fe0"/><path d="M10 4h3l2.500 3v4h-5.500z" fill="#f4a020"/><path d="M11 5h1.800l1.500 2h-3.300z" fill="#cfe8ff"/><rect x="0.500" y="10" width="15" height="1.500" fill="#303030"/><circle cx="3.500" cy="12" r="1.900" fill="#202020"/><circle cx="12" cy="12" r="1.900" fill="#202020"/><circle cx="3.500" cy="12" r=".700" fill="#c0c0c0"/><circle cx="12" cy="12" r=".700" fill="#c0c0c0"/><ellipse cx="8" cy="14.800" rx="7" ry=".800" fill="#b8b8b8"/></g></svg>
<svg style="left:1293px;top:30px" width="16" height="16" viewBox="0 0 16 16"><path d="M0.200 9.600L7.900 12.400 15.800 9V11.200L8.400 14.700 0.400 11.500z" fill="#fff" stroke="#f04848" stroke-width=".700"/><path d="M0 9.200L3.200 8 7.900 9.800 15.600 7.200 15.800 8.700 7.900 12.200z" fill="#f04848"/><path d="M7.400 7.300L15.400 4.500V6.800L7.900 9.600z" fill="#fff" stroke="#e04888" stroke-width=".500"/><path d="M2.700 5.400L7.400 7.300 7.900 9.600 3.200 7.800z" fill="#e04888"/><path d="M2.700 5.400L10.200 3.100 15.400 4.500 7.400 7.300z" fill="#f060a8"/></svg>
<svg style="left:1316px;top:30px" width="16" height="16" viewBox="0 0 16 16"><path d="M0.200 9.600L7.900 12.400 15.800 9V11.200L8.400 14.700 0.400 11.500z" fill="#fff" stroke="#30a0f0" stroke-width=".700"/><path d="M0 9.200L3.200 8 7.900 9.800 15.600 7.200 15.800 8.700 7.900 12.200z" fill="#30a0f0"/><path d="M7.400 7.300L15.400 4.500V6.800L7.900 9.600z" fill="#fff" stroke="#2040b8" stroke-width=".500"/><path d="M2.700 5.400L7.400 7.300 7.900 9.600 3.200 7.800z" fill="#2040b8"/><path d="M2.700 5.400L10.200 3.100 15.400 4.500 7.400 7.300z" fill="#3050d8"/></svg>
<svg style="left:116px;top:108px" width="16" height="16" viewBox="0 0 16 16"><path d="M0.500 2.500h5l1.500 2h8.500v10h-15z" fill="#ffd24a" stroke="#c89a18"/><path d="M0.500 5.500h15" stroke="#ffe9a0"/><path d="M5 7.500v4.500h6" fill="none" stroke="#303030" stroke-width="1.300"/><path d="M2.800 9.500L5 6.500l2.200 3z" fill="#303030"/></svg>
<svg style="left:139px;top:108px" width="16" height="16" viewBox="0 0 16 16"><path d="M0.500 2.500h5l1.500 2h8.500v10h-15z" fill="#8ee04a" stroke="#5aa822"/><path d="M0.500 5.500h15" stroke="#c8f4a0"/><path d="M5.500 9.500h5" stroke="#204010" stroke-width="1.600"/></svg>
<svg style="left:175px;top:108px" width="16" height="16" viewBox="0 0 16 16"><path d="M5.300 4.200C1.200 6 1 12.300 8 13.200" fill="none" stroke="#1a9a1a" stroke-width="2.4"/><path d="M8.300 2.800C14.800 2.800 15 9.500 11.300 12.300" fill="none" stroke="#1a9a1a" stroke-width="2.4"/><path d="M2.600 2h4.600v4.600z" fill="#1a9a1a"/><path d="M9.300 9.300v4.700h4.700z" fill="#1a9a1a"/></svg>
<svg style="left:202px;top:108px" width="16" height="16" viewBox="0 0 16 16"><g transform="translate(0,1)"><rect x="0.500" y="5.500" width="4.500" height="9.500" fill="#c0c0c0" stroke="#b0b0b0"/><rect x="5.500" y="2.500" width="4.500" height="12.500" fill="#c0c0c0" stroke="#b0b0b0"/><rect x="10.500" y="6.500" width="4.500" height="8.500" fill="#c0c0c0" stroke="#b0b0b0"/><path d="M1.500 7.500h2.500M1.500 9.500h2.500M1.500 11.500h2.500M1.500 13.500h2.500M6.500 9.500h2.500M6.500 11.500h2.500M6.500 13.500h2.500M11.500 8.500h2.500M11.500 10.500h2.500M11.500 12.500h2.500" stroke="#e8e8e8"/><rect x="8.5" y="0.5" width="6" height="6" fill="#ffffff" stroke="#9c9c9c" stroke-width="1"/><path d="M12.70 3.50L14.40 3.50M12.35 4.35L13.55 5.55M11.50 4.70L11.50 6.40M10.65 4.35L9.45 5.55M10.30 3.50L8.60 3.50M10.65 2.65L9.45 1.45M11.50 2.30L11.50 0.60M12.35 2.65L13.55 1.45" stroke="#787878" stroke-width="1"/><circle cx="11.5" cy="3.5" r="1.700" fill="#787878"/><circle cx="11.5" cy="3.5" r=".800" fill="#ffffff"/><path d="M6 0.500l1.500 2.500" stroke="#505050" stroke-width=".800"/></g></svg>
<svg style="left:225px;top:108px" width="16" height="16" viewBox="0 0 16 16"><g transform="translate(0,1)"><rect x="0.500" y="0.500" width="6" height="13" fill="#d4d4d4" stroke="#b8b8b8"/><path d="M1.500 2.500h4M1.500 4.500h4M1.500 6.500h4M1.500 8.500h4M1.500 10.500h4M1.500 12.500h4" stroke="#ececec"/><rect x="9" y="7.500" width="6" height="6" fill="#e8e8e8" stroke="#a8a8a8"/><path d="M10 9.500h4M10 11.500h4" stroke="#b8b8b8"/><path d="M8.500 13.800h7" stroke="#707070" stroke-width="1"/><rect x="8.5" y="0.5" width="6" height="6" fill="#ffffff" stroke="#9c9c9c" stroke-width="1"/><path d="M12.70 3.50L14.40 3.50M12.35 4.35L13.55 5.55M11.50 4.70L11.50 6.40M10.65 4.35L9.45 5.55M10.30 3.50L8.60 3.50M10.65 2.65L9.45 1.45M11.50 2.30L11.50 0.60M12.35 2.65L13.55 1.45" stroke="#787878" stroke-width="1"/><circle cx="11.5" cy="3.5" r="1.700" fill="#787878"/><circle cx="11.5" cy="3.5" r=".800" fill="#ffffff"/></g></svg>
<svg style="left:248px;top:108px" width="16" height="16" viewBox="0 0 16 16"><g transform="translate(0,1)"><rect x="4" y="1.500" width="6.500" height="13" fill="#d4d4d4" stroke="#b8b8b8"/><path d="M5 3.500h4.500M5 5.500h4.500M5 7.500h4.500M5 9.500h4.500M5 11.500h4.500M5 13.500h4.500" stroke="#ececec"/><rect x="8.5" y="0.5" width="6" height="6" fill="#ffffff" stroke="#9c9c9c" stroke-width="1"/><path d="M12.70 3.50L14.40 3.50M12.35 4.35L13.55 5.55M11.50 4.70L11.50 6.40M10.65 4.35L9.45 5.55M10.30 3.50L8.60 3.50M10.65 2.65L9.45 1.45M11.50 2.30L11.50 0.60M12.35 2.65L13.55 1.45" stroke="#787878" stroke-width="1"/><circle cx="11.5" cy="3.5" r="1.700" fill="#787878"/><circle cx="11.5" cy="3.5" r=".800" fill="#ffffff"/></g></svg>
<svg style="left:272px;top:108px" width="16" height="16" viewBox="0 0 16 16"><rect x="0.5" y="1.5" width="3" height="13" fill="#fff" stroke="#8c8c8c"/><path d="M1 4.5h2M1 7.5h2M1 10.5h2" stroke="#8c8c8c"/><path d="M0.5 1.5h11" stroke="#8c8c8c"/><path d="M3.5 14.5h3" stroke="#8c8c8c"/><path d="M8 2L4 9h9z" fill="#9370db"/><path d="M11.5 0.5v8l3 1V4.5z" fill="#7b68ee"/><path d="M8.5 1.2L4 9M8.5 1.2L13 9" stroke="#8b2a2a" stroke-width=".8" fill="none"/><rect x="3.5" y="8.2" width="11.5" height="2.2" fill="#e8690b"/><rect x="3.5" y="8.2" width="11.5" height=".8" fill="#ffa040"/><rect x="6.5" y="11" width="3.5" height="5" fill="#1e90ff"/><rect x="11" y="11" width="4.5" height="5" fill="#1e90ff"/><path d="M6.5 12.5h9M6.5 14.5h9M8 11v5M12.5 11v5M14 11v5" stroke="#bfe0ff" stroke-width=".6"/><circle cx="1.5" cy="1" r="1" fill="#9370db"/><rect x="8" y="0" width="7" height="7" fill="#f7941d"/><path d="M12.70 3.50L14.40 3.50M12.35 4.35L13.55 5.55M11.50 4.70L11.50 6.40M10.65 4.35L9.45 5.55M10.30 3.50L8.60 3.50M10.65 2.65L9.45 1.45M11.50 2.30L11.50 0.60M12.35 2.65L13.55 1.45" stroke="#fff" stroke-width="1"/><circle cx="11.5" cy="3.5" r="1.700" fill="#fff"/><circle cx="11.5" cy="3.5" r=".800" fill="#f7941d"/></svg>
<svg style="left:295px;top:108px" width="16" height="16" viewBox="0 0 16 16"><rect x="0.5" y="1.5" width="3" height="13" fill="#fff" stroke="#8c8c8c"/><path d="M1 4.5h2M1 7.5h2M1 10.5h2" stroke="#8c8c8c"/><path d="M0.5 1.5h11" stroke="#8c8c8c"/><path d="M3.5 14.5h3" stroke="#8c8c8c"/><path d="M8 2L4 9h9z" fill="#9370db"/><path d="M11.5 0.5v8l3 1V4.5z" fill="#7b68ee"/><path d="M8.5 1.2L4 9M8.5 1.2L13 9" stroke="#8b2a2a" stroke-width=".8" fill="none"/><rect x="3.5" y="8.2" width="11.5" height="2.2" fill="#e8690b"/><rect x="3.5" y="8.2" width="11.5" height=".8" fill="#ffa040"/><rect x="6.5" y="11" width="3.5" height="5" fill="#1e90ff"/><rect x="11" y="11" width="4.5" height="5" fill="#1e90ff"/><path d="M6.5 12.5h9M6.5 14.5h9M8 11v5M12.5 11v5M14 11v5" stroke="#bfe0ff" stroke-width=".6"/><circle cx="1.5" cy="1" r="1" fill="#9370db"/><rect x="8" y="0" width="7" height="7" fill="#f7941d"/><path d="M12.70 3.50L14.40 3.50M12.35 4.35L13.55 5.55M11.50 4.70L11.50 6.40M10.65 4.35L9.45 5.55M10.30 3.50L8.60 3.50M10.65 2.65L9.45 1.45M11.50 2.30L11.50 0.60M12.35 2.65L13.55 1.45" stroke="#fff" stroke-width="1"/><circle cx="11.5" cy="3.5" r="1.700" fill="#fff"/><circle cx="11.5" cy="3.5" r=".800" fill="#f7941d"/><rect x="6" y="8.500" width="8" height="3.600" rx="1" fill="#1e78f0"/><path d="M12 12v2.500h-4" stroke="#303030" fill="none"/><rect x="5.500" y="13" width="3" height="2.500" fill="#e02020"/></svg>
<svg style="left:318px;top:108px" width="16" height="16" viewBox="0 0 16 16"><g transform="translate(-0.500,-2.200) scale(1.060,1.200)"><path d="M1 9.5L6.5 2.5L15 5.5L10.5 13z" fill="#2e8b57"/><path d="M1 9.5L6.5 2.5L15 5.5L10.5 13z" fill="none" stroke="#257a4a" stroke-width=".8"/><path d="M6.8 5.2l4.6 1.5" stroke="#dff5e8" stroke-width="1.3"/><path d="M1 9.5l9.5 3.5L15 5.5v2.8l-4.4 6.2L1 11.5z" fill="#d9dde0"/><path d="M1 10.6l9.5 3.4L15 7M1 11.5l9.6 3L15 8.3" stroke="#a9b0b5" stroke-width=".6" fill="none"/></g><rect x="8" y="0" width="7" height="7" fill="#f7941d"/><path d="M12.70 3.50L14.40 3.50M12.35 4.35L13.55 5.55M11.50 4.70L11.50 6.40M10.65 4.35L9.45 5.55M10.30 3.50L8.60 3.50M10.65 2.65L9.45 1.45M11.50 2.30L11.50 0.60M12.35 2.65L13.55 1.45" stroke="#fff" stroke-width="1"/><circle cx="11.5" cy="3.5" r="1.700" fill="#fff"/><circle cx="11.5" cy="3.5" r=".800" fill="#f7941d"/></svg>
<svg style="left:341px;top:108px" width="16" height="16" viewBox="0 0 16 16"><g transform="translate(-0.500,-2.200) scale(1.060,1.200)"><path d="M1 9.5L6.5 2.5L15 5.5L10.5 13z" fill="#2e8b57"/><path d="M1 9.5L6.5 2.5L15 5.5L10.5 13z" fill="none" stroke="#257a4a" stroke-width=".8"/><path d="M6.8 5.2l4.6 1.5" stroke="#dff5e8" stroke-width="1.3"/><path d="M1 9.5l9.5 3.5L15 5.5v2.8l-4.4 6.2L1 11.5z" fill="#d9dde0"/><path d="M1 10.6l9.5 3.4L15 7M1 11.5l9.6 3L15 8.3" stroke="#a9b0b5" stroke-width=".6" fill="none"/></g><rect x="8" y="0" width="7" height="7" fill="#f7941d"/><path d="M12.70 3.50L14.40 3.50M12.35 4.35L13.55 5.55M11.50 4.70L11.50 6.40M10.65 4.35L9.45 5.55M10.30 3.50L8.60 3.50M10.65 2.65L9.45 1.45M11.50 2.30L11.50 0.60M12.35 2.65L13.55 1.45" stroke="#fff" stroke-width="1"/><circle cx="11.5" cy="3.5" r="1.700" fill="#fff"/><circle cx="11.5" cy="3.5" r=".800" fill="#f7941d"/><rect x="6" y="8.500" width="8" height="3.600" rx="1" fill="#1e78f0"/><path d="M12 12v2.500h-4" stroke="#303030" fill="none"/><rect x="5.500" y="13" width="3" height="2.500" fill="#e02020"/></svg>
<svg style="left:370px;top:108px" width="16" height="16" viewBox="0 0 16 16"><path d="M1 8L7 1.500l4 4.500V3.500h2v4.700l1.500 1.300" fill="none" stroke="#d2691e" stroke-width="1.400"/><path d="M2.500 8L7 3.200 12.500 8.500V15h-10z" fill="#fffdf4"/><path d="M2.500 8.500V15M12.500 8.500V15" stroke="#e8900c" stroke-width="1.200"/><path d="M2 15.500h11.500" stroke="#b8b8b8"/><rect x="3.600" y="10" width="2.400" height="5" fill="#f09020"/><rect x="7.500" y="9" width="3.500" height="3.500" fill="#40a0f0"/><rect x="8" y="0" width="7" height="7" fill="#f7941d"/><path d="M12.70 3.50L14.40 3.50M12.35 4.35L13.55 5.55M11.50 4.70L11.50 6.40M10.65 4.35L9.45 5.55M10.30 3.50L8.60 3.50M10.65 2.65L9.45 1.45M11.50 2.30L11.50 0.60M12.35 2.65L13.55 1.45" stroke="#fff" stroke-width="1"/><circle cx="11.5" cy="3.5" r="1.700" fill="#fff"/><circle cx="11.5" cy="3.5" r=".800" fill="#f7941d"/></svg>
<svg style="left:393px;top:108px" width="16" height="16" viewBox="0 0 16 16"><path d="M1 8L7 1.500l4 4.500V3.500h2v4.700l1.500 1.300" fill="none" stroke="#d2691e" stroke-width="1.400"/><path d="M2.500 8L7 3.200 12.500 8.500V15h-10z" fill="#fffdf4"/><path d="M2.500 8.500V15M12.500 8.500V15" stroke="#e8900c" stroke-width="1.200"/><path d="M2 15.500h11.500" stroke="#b8b8b8"/><rect x="3.600" y="10" width="2.400" height="5" fill="#f09020"/><rect x="7.500" y="9" width="3.500" height="3.500" fill="#40a0f0"/><rect x="8" y="0" width="7" height="7" fill="#f7941d"/><path d="M12.70 3.50L14.40 3.50M12.35 4.35L13.55 5.55M11.50 4.70L11.50 6.40M10.65 4.35L9.45 5.55M10.30 3.50L8.60 3.50M10.65 2.65L9.45 1.45M11.50 2.30L11.50 0.60M12.35 2.65L13.55 1.45" stroke="#fff" stroke-width="1"/><circle cx="11.5" cy="3.5" r="1.700" fill="#fff"/><circle cx="11.5" cy="3.5" r=".800" fill="#f7941d"/><rect x="6" y="8.500" width="8" height="3.600" rx="1" fill="#1e78f0"/><path d="M12 12v2.500h-4" stroke="#303030" fill="none"/><rect x="5.500" y="13" width="3" height="2.500" fill="#e02020"/></svg>
<svg style="left:421px;top:108px" width="16" height="16" viewBox="0 0 16 16"><rect x="0.500" y="1.500" width="15" height="12.500" fill="#fff" stroke="#9a9a9a"/><rect x="0.5" y="0.5" width="6" height="6" fill="#ffffff" stroke="#a0a0a0" stroke-width="1"/><path d="M4.70 3.50L6.40 3.50M4.35 4.35L5.55 5.55M3.50 4.70L3.50 6.40M2.65 4.35L1.45 5.55M2.30 3.50L0.60 3.50M2.65 2.65L1.45 1.45M3.50 2.30L3.50 0.60M4.35 2.65L5.55 1.45" stroke="#808080" stroke-width="1"/><circle cx="3.5" cy="3.5" r="1.700" fill="#808080"/><circle cx="3.5" cy="3.5" r=".800" fill="#ffffff"/><text x="11" y="13" font-size="9" text-anchor="middle" font-family="Liberation Sans,sans-serif" fill="#000">Р</text></svg>
<svg style="left:444px;top:108px" width="16" height="16" viewBox="0 0 16 16"><rect x="0.500" y="1.500" width="15" height="12.500" fill="#fff" stroke="#9a9a9a"/><rect x="0.5" y="0.5" width="6" height="6" fill="#ffffff" stroke="#a0a0a0" stroke-width="1"/><path d="M4.70 3.50L6.40 3.50M4.35 4.35L5.55 5.55M3.50 4.70L3.50 6.40M2.65 4.35L1.45 5.55M2.30 3.50L0.60 3.50M2.65 2.65L1.45 1.45M3.50 2.30L3.50 0.60M4.35 2.65L5.55 1.45" stroke="#808080" stroke-width="1"/><circle cx="3.5" cy="3.5" r="1.700" fill="#808080"/><circle cx="3.5" cy="3.5" r=".800" fill="#ffffff"/><text x="4" y="13" font-size="8.500" font-family="Liberation Sans,sans-serif" fill="#000" textLength="10.500" lengthAdjust="spacingAndGlyphs">ПР</text></svg>
<svg style="left:467px;top:108px" width="16" height="16" viewBox="0 0 16 16"><path d="M8 1l5.500 6.500h-3.500v7.500h-4v-7.500h-3.500z" fill="#9a9a9a"/></svg>
<svg style="left:490px;top:108px" width="16" height="16" viewBox="0 0 16 16"><path d="M8 15l5.500-6.500h-3.500v-7.500h-4v7.500h-3.500z" fill="#9a9a9a"/></svg>
<svg style="left:519px;top:108px" width="16" height="16" viewBox="0 0 16 16"><path d="M2.500 7L8 1l5.500 6" fill="none" stroke="#c8601c" stroke-width="1.300"/><path d="M4 7L8 2.800 12 7v4h-8z" fill="#fffaf0"/><rect x="7" y="5.500" width="2.600" height="2.600" fill="#58a8f0"/><path d="M0.300 12L3.800 8l3.500 4" fill="none" stroke="#c8601c" stroke-width="1.200"/><path d="M1.300 12L3.800 9.200 6.300 12v3.800h-5z" fill="#fffaf0" stroke="#e8a050" stroke-width=".500"/><rect x="3" y="12.500" width="1.600" height="3" fill="#e08020"/><path d="M8.700 12l3.500-4 3.500 4" fill="none" stroke="#c8601c" stroke-width="1.200"/><path d="M9.700 12l2.500-2.800 2.500 2.800v3.800h-5z" fill="#fffaf0" stroke="#e8a050" stroke-width=".500"/><rect x="11.400" y="12.500" width="1.600" height="3" fill="#e08020"/></svg>
<svg style="left:542px;top:108px" width="16" height="16" viewBox="0 0 16 16"><rect x="3.500" y="2.500" width="11" height="11" fill="#3a9a8a" stroke="#2a7a6c"/><rect x="0.500" y="4.500" width="11" height="11" fill="#2e9e8c" stroke="#227a6a"/><text x="6" y="13.500" font-size="9" font-family="Liberation Sans,sans-serif" fill="#fff" text-anchor="middle">%</text><rect x="8" y="0" width="7" height="7" fill="#f7941d"/><path d="M12.70 3.50L14.40 3.50M12.35 4.35L13.55 5.55M11.50 4.70L11.50 6.40M10.65 4.35L9.45 5.55M10.30 3.50L8.60 3.50M10.65 2.65L9.45 1.45M11.50 2.30L11.50 0.60M12.35 2.65L13.55 1.45" stroke="#fff" stroke-width="1"/><circle cx="11.5" cy="3.5" r="1.700" fill="#fff"/><circle cx="11.5" cy="3.5" r=".800" fill="#f7941d"/></svg>
<svg style="left:571px;top:108px" width="16" height="16" viewBox="0 0 16 16"><rect x="0.500" y="2.500" width="14" height="12" fill="#fafafa" stroke="#b0b0b0"/><text x="3.0" y="13.500" font-size="12" font-family="Liberation Sans,sans-serif" fill="#383838" textLength="9" lengthAdjust="spacingAndGlyphs">%</text><rect x="8" y="0" width="7" height="7" fill="#f7941d"/><path d="M12.70 3.50L14.40 3.50M12.35 4.35L13.55 5.55M11.50 4.70L11.50 6.40M10.65 4.35L9.45 5.55M10.30 3.50L8.60 3.50M10.65 2.65L9.45 1.45M11.50 2.30L11.50 0.60M12.35 2.65L13.55 1.45" stroke="#fff" stroke-width="1"/><circle cx="11.5" cy="3.5" r="1.700" fill="#fff"/><circle cx="11.5" cy="3.5" r=".800" fill="#f7941d"/></svg>
<svg style="left:594px;top:108px" width="16" height="16" viewBox="0 0 16 16"><rect x="0.500" y="2.500" width="14" height="12" fill="#e4f4e0" stroke="#b0b0b0"/><text x="1.0" y="13.500" font-size="12" font-family="Liberation Sans,sans-serif" fill="#383838" textLength="13" lengthAdjust="spacingAndGlyphs">М29</text><rect x="8" y="0" width="7" height="7" fill="#f7941d"/><path d="M12.70 3.50L14.40 3.50M12.35 4.35L13.55 5.55M11.50 4.70L11.50 6.40M10.65 4.35L9.45 5.55M10.30 3.50L8.60 3.50M10.65 2.65L9.45 1.45M11.50 2.30L11.50 0.60M12.35 2.65L13.55 1.45" stroke="#fff" stroke-width="1"/><circle cx="11.5" cy="3.5" r="1.700" fill="#fff"/><circle cx="11.5" cy="3.5" r=".800" fill="#f7941d"/></svg>
<svg style="left:617px;top:108px" width="16" height="16" viewBox="0 0 16 16"><rect x="0.500" y="2.500" width="14" height="12" fill="#e8f0fa" stroke="#b0b0b0"/><text x="2.5" y="13.500" font-size="12" font-family="Liberation Sans,sans-serif" fill="#383838" textLength="10" lengthAdjust="spacingAndGlyphs">РР</text><rect x="8" y="0" width="7" height="7" fill="#f7941d"/><path d="M12.70 3.50L14.40 3.50M12.35 4.35L13.55 5.55M11.50 4.70L11.50 6.40M10.65 4.35L9.45 5.55M10.30 3.50L8.60 3.50M10.65 2.65L9.45 1.45M11.50 2.30L11.50 0.60M12.35 2.65L13.55 1.45" stroke="#fff" stroke-width="1"/><circle cx="11.5" cy="3.5" r="1.700" fill="#fff"/><circle cx="11.5" cy="3.5" r=".800" fill="#f7941d"/></svg>
<svg style="left:640px;top:108px" width="16" height="16" viewBox="0 0 16 16"><rect x="0.500" y="2.500" width="14" height="12" fill="#e4f4e0" stroke="#b0b0b0"/><text x="2.0" y="13.500" font-size="12" font-family="Liberation Sans,sans-serif" fill="#383838" textLength="11" lengthAdjust="spacingAndGlyphs">ФЗ</text><rect x="8" y="0" width="7" height="7" fill="#f7941d"/><path d="M12.70 3.50L14.40 3.50M12.35 4.35L13.55 5.55M11.50 4.70L11.50 6.40M10.65 4.35L9.45 5.55M10.30 3.50L8.60 3.50M10.65 2.65L9.45 1.45M11.50 2.30L11.50 0.60M12.35 2.65L13.55 1.45" stroke="#fff" stroke-width="1"/><circle cx="11.5" cy="3.5" r="1.700" fill="#fff"/><circle cx="11.5" cy="3.5" r=".800" fill="#f7941d"/></svg>
<svg style="left:669px;top:108px" width="16" height="16" viewBox="0 0 16 16"><path d="M0.500 2.500h5l1.500 2h8.500v10h-15z" fill="#a8a8a8" stroke="#8c8c8c"/><path d="M0.500 5.500h15" stroke="#c4c4c4"/><rect x="8.5" y="0.5" width="6" height="6" fill="#ffffff" stroke="#9c9c9c" stroke-width="1"/><path d="M12.70 3.50L14.40 3.50M12.35 4.35L13.55 5.55M11.50 4.70L11.50 6.40M10.65 4.35L9.45 5.55M10.30 3.50L8.60 3.50M10.65 2.65L9.45 1.45M11.50 2.30L11.50 0.60M12.35 2.65L13.55 1.45" stroke="#787878" stroke-width="1"/><circle cx="11.5" cy="3.5" r="1.700" fill="#787878"/><circle cx="11.5" cy="3.5" r=".800" fill="#ffffff"/></svg>
<svg style="left:698px;top:108px" width="16" height="16" viewBox="0 0 16 16"><path d="M2.500 2.500l10 10.500M12.500 2.500l-10 10.500" stroke="#e03020" stroke-width="1.500"/></svg>
<div style="left:1px;top:130px;width:1px;height:961px;background:#fff;"></div>
<div style="left:2px;top:130px;width:1px;height:960px;background:#f8f8f8;"></div>
<div style="left:1px;top:1091px;width:509px;height:1px;background:#696969;"></div>
<div style="left:2px;top:1090px;width:507px;height:1px;background:#a0a0a0;"></div>
<div style="left:509px;top:150px;width:1px;height:941px;background:#696969;"></div>
<div style="left:508px;top:151px;width:1px;height:939px;background:#a0a0a0;"></div>
<div style="left:67px;top:150px;width:442px;height:1px;background:#fff;"></div>
<div style="left:4px;top:130px;width:62px;height:1px;background:#fff;"></div>
<div style="left:66px;top:131px;width:1px;height:20px;background:#696969;"></div>
<div style="left:65px;top:132px;width:1px;height:19px;background:#a0a0a0;"></div>
<span id="t36" class="t " style="top:127.0px;font-size:12px;line-height:24px;height:24px;left:9.5px;transform-origin:0 0;transform:scaleX(0.8957);">Структура</span>
<div style="left:5px;top:153px;width:501px;height:935px;background:#fff;box-sizing:border-box;border-top:1px solid #a0a0a0;border-left:1px solid #a0a0a0;border-right:1px solid #fff;border-bottom:1px solid #fff;"></div>
<div style="left:6px;top:154px;width:498px;height:1px;background:#696969;"></div>
<div style="left:6px;top:154px;width:1px;height:932px;background:#696969;"></div>
<div style="left:7px;top:1086px;width:498px;height:1px;background:#e3e3e3;"></div>
<div style="left:504px;top:155px;width:1px;height:932px;background:#e3e3e3;"></div>
<div style="left:34px;top:171px;width:1px;height:137px;background:repeating-linear-gradient(to bottom,#808080 0 1px,transparent 1px 2px);"></div>
<div style="left:53px;top:187px;width:1px;height:73px;background:repeating-linear-gradient(to bottom,#808080 0 1px,transparent 1px 2px);"></div>
<div style="left:72px;top:203px;width:1px;height:25px;background:repeating-linear-gradient(to bottom,#808080 0 1px,transparent 1px 2px);"></div>
<div style="left:20px;top:163px;width:6px;height:1px;background:repeating-linear-gradient(to right,#808080 0 1px,transparent 1px 2px);"></div>
<div style="left:11px;top:159px;width:9px;height:9px;background:#fff;box-sizing:border-box;border:1px solid #808080;"></div>
<div style="left:13px;top:163px;width:5px;height:1px;background:#000;"></div>
<span id="t37" class="t " style="top:151.0px;font-size:12px;line-height:24px;height:24px;left:46.5px;transform-origin:0 0;transform:scaleX(0.9552);">Проекты</span>
<div style="left:39px;top:179px;width:7px;height:1px;background:repeating-linear-gradient(to right,#808080 0 1px,transparent 1px 2px);"></div>
<div style="left:30px;top:175px;width:9px;height:9px;background:#fff;box-sizing:border-box;border:1px solid #808080;"></div>
<div style="left:32px;top:179px;width:5px;height:1px;background:#000;"></div>
<span id="t38" class="t " style="top:167.0px;font-size:12px;line-height:24px;height:24px;left:66.5px;transform-origin:0 0;transform:scaleX(0.9347);">Здание спортивного комплекса</span>
<span id="t39" class="t " style="top:167.0px;font-size:12px;line-height:24px;height:24px;color:#0000ff;left:236.5px;transform-origin:0 0;transform:scaleX(0.8993);">[4]</span>
<div style="left:58px;top:195px;width:7px;height:1px;background:repeating-linear-gradient(to right,#808080 0 1px,transparent 1px 2px);"></div>
<div style="left:49px;top:191px;width:9px;height:9px;background:#fff;box-sizing:border-box;border:1px solid #808080;"></div>
<div style="left:51px;top:195px;width:5px;height:1px;background:#000;"></div>
<span id="t40" class="t " style="top:183.0px;font-size:12px;line-height:24px;height:24px;left:85.5px;transform-origin:0 0;transform:scaleX(0.9216);">Объекты подсобного и обслуживающего назначения</span>
<span id="t41" class="t " style="top:183.0px;font-size:12px;line-height:24px;height:24px;color:#0000ff;left:362.5px;transform-origin:0 0;transform:scaleX(0.9742);">[1]</span>
<div style="left:77px;top:211px;width:5.5px;height:1px;background:repeating-linear-gradient(to right,#808080 0 1px,transparent 1px 2px);"></div>
<div style="left:68px;top:207px;width:9px;height:9px;background:#fff;box-sizing:border-box;border:1px solid #808080;"></div>
<div style="left:70px;top:211px;width:5px;height:1px;background:#000;"></div>
<div style="left:72px;top:209px;width:1px;height:5px;background:#000;"></div>
<div style="left:102px;top:204px;width:128px;height:13px;background:#0078d7;outline:1px dotted #e8a060;outline-offset:-1px;"></div>
<span id="t42" class="t " style="top:199.0px;font-size:12px;line-height:24px;height:24px;color:#fff;left:104.5px;transform-origin:0 0;transform:scaleX(0.9246);">Новая локальная смета</span>
<div style="left:77px;top:227px;width:5.5px;height:1px;background:repeating-linear-gradient(to right,#808080 0 1px,transparent 1px 2px);"></div>
<div style="left:68px;top:223px;width:9px;height:9px;background:#fff;box-sizing:border-box;border:1px solid #808080;"></div>
<div style="left:70px;top:227px;width:5px;height:1px;background:#000;"></div>
<div style="left:72px;top:225px;width:1px;height:5px;background:#000;"></div>
<span id="t43" class="t " style="top:215.0px;font-size:12px;line-height:24px;height:24px;left:104.5px;transform-origin:0 0;transform:scaleX(0.9224);">Объекты подсобного назначения</span>
<div style="left:58px;top:243px;width:7px;height:1px;background:repeating-linear-gradient(to right,#808080 0 1px,transparent 1px 2px);"></div>
<div style="left:49px;top:239px;width:9px;height:9px;background:#fff;box-sizing:border-box;border:1px solid #808080;"></div>
<div style="left:51px;top:243px;width:5px;height:1px;background:#000;"></div>
<div style="left:53px;top:241px;width:1px;height:5px;background:#000;"></div>
<span id="t44" class="t " style="top:231.0px;font-size:12px;line-height:24px;height:24px;left:85.5px;transform-origin:0 0;transform:scaleX(0.9253);">Основные объекты строительства</span>
<span id="t45" class="t " style="top:231.0px;font-size:12px;line-height:24px;height:24px;color:#0000ff;left:269.5px;transform-origin:0 0;transform:scaleX(0.8993);">[2]</span>
<div style="left:58px;top:259px;width:7px;height:1px;background:repeating-linear-gradient(to right,#808080 0 1px,transparent 1px 2px);"></div>
<div style="left:49px;top:255px;width:9px;height:9px;background:#fff;box-sizing:border-box;border:1px solid #808080;"></div>
<div style="left:51px;top:259px;width:5px;height:1px;background:#000;"></div>
<div style="left:53px;top:257px;width:1px;height:5px;background:#000;"></div>
<span id="t46" class="t " style="top:247.0px;font-size:12px;line-height:24px;height:24px;left:85.5px;transform-origin:0 0;transform:scaleX(0.9261);">Подготовка территории строительства</span>
<span id="t47" class="t " style="top:247.0px;font-size:12px;line-height:24px;height:24px;color:#0000ff;left:291.5px;transform-origin:0 0;transform:scaleX(0.8993);">[1]</span>
<div style="left:39px;top:275px;width:7px;height:1px;background:repeating-linear-gradient(to right,#808080 0 1px,transparent 1px 2px);"></div>
<div style="left:30px;top:271px;width:9px;height:9px;background:#fff;box-sizing:border-box;border:1px solid #808080;"></div>
<div style="left:32px;top:275px;width:5px;height:1px;background:#000;"></div>
<div style="left:34px;top:273px;width:1px;height:5px;background:#000;"></div>
<span id="t48" class="t " style="top:263.0px;font-size:12px;line-height:24px;height:24px;left:66.5px;transform-origin:0 0;transform:scaleX(0.9292);">Новая папка</span>
<span id="t49" class="t " style="top:263.0px;font-size:12px;line-height:24px;height:24px;color:#0000ff;left:138.5px;transform-origin:0 0;transform:scaleX(0.8993);">[33]</span>
<div style="left:34px;top:291px;width:12px;height:1px;background:repeating-linear-gradient(to right,#808080 0 1px,transparent 1px 2px);"></div>
<span id="t50" class="t " style="top:279.0px;font-size:12px;line-height:24px;height:24px;left:66.5px;transform-origin:0 0;transform:scaleX(0.8661);">ОБМЕН</span>
<span id="t51" class="t " style="top:279.0px;font-size:12px;line-height:24px;height:24px;color:#0000ff;left:111.5px;transform-origin:0 0;transform:scaleX(0.9742);">[0]</span>
<div style="left:39px;top:307px;width:7px;height:1px;background:repeating-linear-gradient(to right,#808080 0 1px,transparent 1px 2px);"></div>
<div style="left:30px;top:303px;width:9px;height:9px;background:#fff;box-sizing:border-box;border:1px solid #808080;"></div>
<div style="left:32px;top:307px;width:5px;height:1px;background:#000;"></div>
<div style="left:34px;top:305px;width:1px;height:5px;background:#000;"></div>
<span id="t52" class="t " style="top:295.0px;font-size:12px;line-height:24px;height:24px;left:66.5px;transform-origin:0 0;transform:scaleX(0.9206);">КОРЗИНА</span>
<div style="left:514px;top:131px;width:1px;height:960px;background:#fff;"></div>
<div style="left:515px;top:152px;width:1px;height:938px;background:#fff;"></div>
<div style="left:514px;top:1091px;width:1238px;height:1px;background:#696969;"></div>
<div style="left:515px;top:1090px;width:1236px;height:1px;background:#a0a0a0;"></div>
<div style="left:592px;top:151px;width:1159px;height:1px;background:#fff;"></div>
<div style="left:514px;top:131px;width:76px;height:1px;background:#fff;"></div>
<div style="left:514px;top:131px;width:1px;height:21px;background:#fff;"></div>
<div style="left:591px;top:132px;width:1px;height:20px;background:#696969;"></div>
<div style="left:590px;top:133px;width:1px;height:19px;background:#a0a0a0;"></div>
<span id="t53" class="t " style="top:128.0px;font-size:12px;line-height:24px;height:24px;left:521.5px;transform-origin:0 0;transform:scaleX(0.9125);">Содержание</span>
<div style="left:593px;top:133px;width:67px;height:1px;background:#fff;"></div>
<div style="left:593px;top:134px;width:1px;height:17px;background:#fff;"></div>
<div style="left:661px;top:134px;width:1px;height:17px;background:#696969;"></div>
<div style="left:660px;top:135px;width:1px;height:16px;background:#a0a0a0;"></div>
<span id="t54" class="t " style="top:130.0px;font-size:12px;line-height:24px;height:24px;left:596.5px;transform-origin:0 0;transform:scaleX(0.9380);">Параметры</span>
<div style="left:662px;top:133px;width:100px;height:1px;background:#fff;"></div>
<div style="left:662px;top:134px;width:1px;height:17px;background:#fff;"></div>
<div style="left:763px;top:134px;width:1px;height:17px;background:#696969;"></div>
<div style="left:762px;top:135px;width:1px;height:16px;background:#a0a0a0;"></div>
<span id="t55" class="t " style="top:130.0px;font-size:12px;line-height:24px;height:24px;left:667.5px;transform-origin:0 0;transform:scaleX(0.9424);">Объектная смета</span>
<div style="left:764px;top:133px;width:57px;height:1px;background:#fff;"></div>
<div style="left:764px;top:134px;width:1px;height:17px;background:#fff;"></div>
<div style="left:822px;top:134px;width:1px;height:17px;background:#696969;"></div>
<div style="left:821px;top:135px;width:1px;height:16px;background:#a0a0a0;"></div>
<span id="t56" class="t " style="top:130.0px;font-size:12px;line-height:24px;height:24px;left:769.5px;transform-origin:0 0;transform:scaleX(0.8807);">ССР и СЗ</span>
<div style="left:823px;top:133px;width:42px;height:1px;background:#fff;"></div>
<div style="left:823px;top:134px;width:1px;height:17px;background:#fff;"></div>
<div style="left:866px;top:134px;width:1px;height:17px;background:#696969;"></div>
<div style="left:865px;top:135px;width:1px;height:16px;background:#a0a0a0;"></div>
<span id="t57" class="t " style="top:130.0px;font-size:12px;line-height:24px;height:24px;left:828.5px;transform-origin:0 0;transform:scaleX(0.9267);">НМЦК</span>
<div style="left:867px;top:133px;width:40px;height:1px;background:#fff;"></div>
<div style="left:867px;top:134px;width:1px;height:17px;background:#fff;"></div>
<div style="left:908px;top:134px;width:1px;height:17px;background:#696969;"></div>
<div style="left:907px;top:135px;width:1px;height:16px;background:#a0a0a0;"></div>
<span id="t58" class="t " style="top:130.0px;font-size:12px;line-height:24px;height:24px;left:872.5px;transform-origin:0 0;transform:scaleX(0.9217);">ВОР</span>
<div style="left:909px;top:133px;width:195px;height:1px;background:#fff;"></div>
<div style="left:909px;top:134px;width:1px;height:17px;background:#fff;"></div>
<div style="left:1105px;top:134px;width:1px;height:17px;background:#696969;"></div>
<div style="left:1104px;top:135px;width:1px;height:16px;background:#a0a0a0;"></div>
<span id="t59" class="t " style="top:130.0px;font-size:12px;line-height:24px;height:24px;left:914.5px;transform-origin:0 0;transform:scaleX(0.9145);">Исполнение Сметы контракта (ЕИС)</span>
<div style="left:518px;top:154px;width:1229px;height:450px;background:#fff;box-sizing:border-box;border-top:1px solid #a0a0a0;border-left:1px solid #a0a0a0;"></div>
<div style="left:520px;top:157px;width:1224px;height:15px;background:#f0f0f0;"></div>
<div style="left:520px;top:156px;width:1225px;height:1px;background:#fff;"></div>
<div style="left:520px;top:156px;width:1px;height:16px;background:#fff;"></div>
<div style="left:520px;top:172px;width:1226px;height:1px;background:#696969;"></div>
<div style="left:521px;top:171px;width:1224px;height:1px;background:#a0a0a0;"></div>
<div style="left:1745px;top:156px;width:1px;height:17px;background:#696969;"></div>
<div style="left:1744px;top:157px;width:1px;height:15px;background:#a0a0a0;"></div>
<span id="t60" class="t " style="top:153.0px;font-size:12px;line-height:24px;height:24px;left:525.5px;transform-origin:0 0;transform:scaleX(0.9256);">Наименование</span>
<span id="t61" class="t " style="top:172.0px;font-size:12px;line-height:24px;height:24px;left:539.5px;transform-origin:0 0;transform:scaleX(0.9690);">СТРУКТУРА</span>
<span id="t62" class="t " style="top:189.0px;font-size:12px;line-height:24px;height:24px;left:539.5px;transform-origin:0 0;transform:scaleX(0.9217);">СМЕТЫ</span>
<span id="t63" class="t " style="top:206.0px;font-size:12px;line-height:24px;height:24px;left:539.5px;transform-origin:0 0;transform:scaleX(0.9315);">ВЫПОЛНЕНИЯ</span>
<span id="t64" class="t " style="top:223.0px;font-size:12px;line-height:24px;height:24px;left:539.5px;transform-origin:0 0;transform:scaleX(0.9509);">М-29</span>
<span id="t65" class="t " style="top:240.0px;font-size:12px;line-height:24px;height:24px;left:539.5px;transform-origin:0 0;transform:scaleX(0.9175);">РЕСУРСНЫЕ РАСЧЕТЫ</span>
<span id="t66" class="t " style="top:257.0px;font-size:12px;line-height:24px;height:24px;left:539.5px;transform-origin:0 0;transform:scaleX(0.9159);">КС-3</span>
<div style="left:520px;top:603px;width:1226px;height:1px;background:#a0a0a0;"></div>
<div style="left:520px;top:604px;width:1226px;height:36px;background:#ffffe1;"></div>
<div style="left:520px;top:640px;width:1226px;height:1px;background:#a0a0a0;"></div>
<span id="t67" class="t " style="top:610.0px;font-size:12px;line-height:24px;height:24px;font-weight:bold;left:561.5px;transform-origin:0 0;transform:scaleX(0.9805);">Архивные копии</span>
<div style="left:520px;top:641px;width:1226px;height:16px;background:#f0f0f0;"></div>
<div style="left:520px;top:657px;width:1226px;height:1px;background:#a0a0a0;"></div>
<div style="left:1745px;top:641px;width:1px;height:16px;background:#a0a0a0;"></div>
<div style="left:1057px;top:642px;width:1px;height:14px;background:#a0a0a0;"></div>
<div style="left:1272px;top:642px;width:1px;height:14px;background:#a0a0a0;"></div>
<div style="left:1380px;top:642px;width:1px;height:14px;background:#a0a0a0;"></div>
<div style="left:1531px;top:642px;width:1px;height:14px;background:#a0a0a0;"></div>
<span id="t68" class="t " style="top:637.0px;font-size:12px;line-height:24px;height:24px;left:522.5px;transform-origin:0 0;transform:scaleX(0.9256);">Наименование</span>
<span id="t69" class="t " style="top:637.0px;font-size:12px;line-height:24px;height:24px;left:1061.5px;transform-origin:0 0;transform:scaleX(0.8467);">Шифр</span>
<span id="t70" class="t " style="top:637.0px;font-size:12px;line-height:24px;height:24px;left:1275.5px;transform-origin:0 0;transform:scaleX(0.9578);">Ревизия</span>
<span id="t71" class="t " style="top:637.0px;font-size:12px;line-height:24px;height:24px;left:1384.5px;transform-origin:0 0;transform:scaleX(0.9782);">Дата</span>
<span id="t72" class="t " style="top:637.0px;font-size:12px;line-height:24px;height:24px;left:1534.5px;transform-origin:0 0;transform:scaleX(0.9502);">Пользователь</span>
<div style="left:519px;top:658px;width:1227px;height:52px;background:#fff;"></div>
<div style="left:518px;top:604px;width:1px;height:440px;background:#a0a0a0;"></div>
<div style="left:520px;top:710px;width:1226px;height:1px;background:#a0a0a0;"></div>
<div style="left:520px;top:711px;width:1226px;height:36px;background:#ffffe1;"></div>
<div style="left:520px;top:747px;width:1226px;height:1px;background:#a0a0a0;"></div>
<span id="t73" class="t " style="top:717.0px;font-size:12px;line-height:24px;height:24px;font-weight:bold;left:563.5px;transform-origin:0 0;transform:scaleX(1.0138);">Краткое описание объекта (необходим пересчет)</span>
<span id="t74" class="t " style="top:716.0px;font-size:12px;line-height:24px;height:24px;font-weight:bold;left:1648.5px;transform-origin:0 0;transform:scaleX(1.0045);">Пересчитать</span>
<div style="left:519px;top:748px;width:1227px;height:174px;background:#fff;"></div>
<div style="left:520px;top:748px;width:1px;height:174px;background:#a0a0a0;"></div>
<div style="left:1745px;top:748px;width:1px;height:174px;background:#e3e3e3;"></div>
<div style="left:520px;top:804px;width:1225px;height:1px;background:#a0a0a0;"></div>
<span id="t75" class="t " style="top:745.0px;font-size:12px;line-height:24px;height:24px;font-weight:bold;left:524.5px;transform-origin:0 0;">Наименование:</span>
<span id="t76" class="t " style="top:745.0px;font-size:12px;line-height:24px;height:24px;left:619.5px;transform-origin:0 0;transform:scaleX(0.9321);">Новая локальная смета</span>
<span id="t77" class="t " style="top:758.0px;font-size:12px;line-height:24px;height:24px;font-weight:bold;left:524.5px;transform-origin:0 0;transform:scaleX(0.8966);">Шифр:</span>
<span id="t78" class="t " style="top:758.0px;font-size:12px;line-height:24px;height:24px;left:564.5px;transform-origin:0 0;transform:scaleX(0.9321);">Новая локальная смета</span>
<span id="t79" class="t " style="top:771.0px;font-size:12px;line-height:24px;height:24px;font-weight:bold;left:524.5px;transform-origin:0 0;transform:scaleX(1.0073);">Нормативная база:</span>
<span id="t80" class="t " style="top:784.0px;font-size:12px;line-height:24px;height:24px;font-weight:bold;left:524.5px;transform-origin:0 0;transform:scaleX(1.0277);">Дата изменения:</span>
<span id="t81" class="t " style="top:784.0px;font-size:12px;line-height:24px;height:24px;left:630.5px;transform-origin:0 0;transform:scaleX(0.9082);">21.05.2025 19:29:42</span>
<span id="t82" class="t " style="top:803.0px;font-size:12px;line-height:24px;height:24px;font-weight:bold;left:524.5px;transform-origin:0 0;transform:scaleX(1.0182);">Показатели пересчета уровня цен "Уровень цен":</span>
<span id="t83" class="t " style="top:816.0px;font-size:12px;line-height:24px;height:24px;left:533.5px;transform-origin:0 0;transform:scaleX(0.9139);">- индексы: (не назначены)</span>
<div style="left:520px;top:922px;width:1226px;height:1px;background:#a0a0a0;"></div>
<div style="left:520px;top:923px;width:1224px;height:16px;background:#f0f0f0;"></div>
<div style="left:1543px;top:924px;width:1px;height:14px;background:#a0a0a0;"></div>
<span id="t84" class="t " style="top:919.0px;font-size:12px;line-height:24px;height:24px;left:522.5px;transform-origin:0 0;transform:scaleX(0.9321);">Стоимость</span>
<span id="t85" class="t " style="top:919.0px;font-size:12px;line-height:24px;height:24px;right:11.5px;transform-origin:100% 0;transform:scaleX(0.9481);">Уровень цен</span>
<div style="left:520px;top:939px;width:1225px;height:1px;background:#a0a0a0;"></div>
<div style="left:520px;top:940px;width:1224px;height:16px;background:#e6ffff;"></div>
<span id="t86" class="t " style="top:936.0px;font-size:12px;line-height:24px;height:24px;left:524.5px;transform-origin:0 0;transform:scaleX(0.9043);">Строительных работ с НР и СП</span>
<span id="t87" class="t " style="top:936.0px;font-size:12px;line-height:24px;height:24px;right:11.5px;transform-origin:100% 0;transform:scaleX(0.9418);">0,00</span>
<div style="left:520px;top:956px;width:1225px;height:1px;background:#a0a0a0;"></div>
<div style="left:520px;top:957px;width:1224px;height:16px;background:#e6ffff;"></div>
<span id="t88" class="t " style="top:953.0px;font-size:12px;line-height:24px;height:24px;left:524.5px;transform-origin:0 0;transform:scaleX(0.9113);">Монтажных работ с НР и СП</span>
<span id="t89" class="t " style="top:953.0px;font-size:12px;line-height:24px;height:24px;right:11.5px;transform-origin:100% 0;transform:scaleX(0.9418);">0,00</span>
<div style="left:520px;top:973px;width:1225px;height:1px;background:#a0a0a0;"></div>
<div style="left:520px;top:974px;width:1224px;height:16px;background:#e6ffff;"></div>
<span id="t90" class="t " style="top:970.0px;font-size:12px;line-height:24px;height:24px;left:524.5px;transform-origin:0 0;transform:scaleX(0.9085);">Оборудования</span>
<span id="t91" class="t " style="top:970.0px;font-size:12px;line-height:24px;height:24px;right:11.5px;transform-origin:100% 0;transform:scaleX(0.9418);">0,00</span>
<div style="left:520px;top:990px;width:1225px;height:1px;background:#a0a0a0;"></div>
<div style="left:520px;top:991px;width:1224px;height:16px;background:#e6ffff;"></div>
<span id="t92" class="t " style="top:987.0px;font-size:12px;line-height:24px;height:24px;left:524.5px;transform-origin:0 0;transform:scaleX(0.9036);">Прочих работ с НР и СП</span>
<span id="t93" class="t " style="top:987.0px;font-size:12px;line-height:24px;height:24px;right:11.5px;transform-origin:100% 0;transform:scaleX(0.9418);">0,00</span>
<div style="left:520px;top:1007px;width:1225px;height:1px;background:#a0a0a0;"></div>
<div style="left:520px;top:1008px;width:1224px;height:16px;background:#e6ffff;"></div>
<span id="t94" class="t " style="top:1004.0px;font-size:12px;line-height:24px;height:24px;font-weight:bold;left:525.5px;transform-origin:0 0;transform:scaleX(1.0363);">Всего с НР и СП</span>
<span id="t95" class="t " style="top:1004.0px;font-size:12px;line-height:24px;height:24px;font-weight:bold;right:11.5px;transform-origin:100% 0;transform:scaleX(1.1130);">0,00</span>
<div style="left:520px;top:1024px;width:1225px;height:1px;background:#a0a0a0;"></div>
<div style="left:520px;top:1025px;width:1224px;height:16px;background:#e6ffff;"></div>
<span id="t96" class="t " style="top:1021.0px;font-size:12px;line-height:24px;height:24px;font-weight:bold;left:525.5px;transform-origin:0 0;transform:scaleX(1.0160);">Итого с начислениями</span>
<span id="t97" class="t " style="top:1021.0px;font-size:12px;line-height:24px;height:24px;font-weight:bold;right:11.5px;transform-origin:100% 0;transform:scaleX(1.1130);">0,00</span>
<div style="left:520px;top:1041px;width:1225px;height:1px;background:#a0a0a0;"></div>
<div style="left:1744px;top:922px;width:2px;height:121px;background:#f0f0f0;"></div>
<div style="left:1743px;top:923px;width:1px;height:119px;background:#a0a0a0;"></div>
<div style="left:518px;top:1044px;width:1229px;height:1px;background:#fff;"></div>
<div style="left:518px;top:1045px;width:1229px;height:1px;background:#c0c0c0;"></div>
<div style="left:1745px;top:922px;width:1px;height:123px;background:#fff;"></div>
<div style="left:519px;top:1042px;width:1227px;height:2px;background:#f0f0f0;"></div>
<div style="left:518px;top:1049px;width:100px;height:36px;background:#f0f0f0;box-sizing:border-box;border-top:1px solid #fff;border-left:1px solid #fff;border-right:1px solid #696969;border-bottom:1px solid #696969;"></div>
<div style="left:616px;top:1050px;width:1px;height:34px;background:#a0a0a0;"></div>
<div style="left:519px;top:1083px;width:98px;height:1px;background:#a0a0a0;"></div>
<span id="t98" class="t " style="top:1064.0px;font-size:12px;line-height:24px;height:24px;left:522.5px;transform-origin:0 0;transform:scaleX(0.9450);">Проектная смета</span>
<div style="left:618px;top:1049px;width:100px;height:36px;background:#f0f0f0;box-sizing:border-box;border-top:1px solid #fff;border-left:1px solid #fff;border-right:1px solid #696969;border-bottom:1px solid #696969;"></div>
<div style="left:716px;top:1050px;width:1px;height:34px;background:#a0a0a0;"></div>
<div style="left:619px;top:1083px;width:98px;height:1px;background:#a0a0a0;"></div>
<span id="t99" class="t " style="top:1064.0px;font-size:12px;line-height:24px;height:24px;left:645.5px;transform-origin:0 0;transform:scaleX(0.9293);">Акт КС-2</span>
<div style="left:718px;top:1049px;width:100px;height:36px;background:#f0f0f0;box-sizing:border-box;border-top:1px solid #fff;border-left:1px solid #fff;border-right:1px solid #696969;border-bottom:1px solid #696969;"></div>
<div style="left:816px;top:1050px;width:1px;height:34px;background:#a0a0a0;"></div>
<div style="left:719px;top:1083px;width:98px;height:1px;background:#a0a0a0;"></div>
<span id="t100" class="t " style="top:1064.0px;font-size:12px;line-height:24px;height:24px;left:725.0px;transform-origin:0 0;transform:scaleX(0.9237);">Исполнительная</span>
<div style="left:818px;top:1049px;width:100px;height:36px;background:#f0f0f0;box-sizing:border-box;border-top:1px solid #fff;border-left:1px solid #fff;border-right:1px solid #696969;border-bottom:1px solid #696969;"></div>
<div style="left:916px;top:1050px;width:1px;height:34px;background:#a0a0a0;"></div>
<div style="left:819px;top:1083px;width:98px;height:1px;background:#a0a0a0;"></div>
<span id="t101" class="t " style="top:1064.0px;font-size:12px;line-height:24px;height:24px;left:831.5px;transform-origin:0 0;transform:scaleX(0.9125);">Журнал КС-6а</span>
<div style="left:918px;top:1049px;width:100px;height:36px;background:#f0f0f0;box-sizing:border-box;border-top:1px solid #fff;border-left:1px solid #fff;border-right:1px solid #696969;border-bottom:1px solid #696969;"></div>
<div style="left:1016px;top:1050px;width:1px;height:34px;background:#a0a0a0;"></div>
<div style="left:919px;top:1083px;width:98px;height:1px;background:#a0a0a0;"></div>
<span id="t102" class="t " style="top:1064.0px;font-size:12px;line-height:24px;height:24px;left:940.0px;transform-origin:0 0;transform:scaleX(0.8972);">Отчет М-29</span>
<div style="left:1018px;top:1049px;width:100px;height:36px;background:#f0f0f0;box-sizing:border-box;border-top:1px solid #fff;border-left:1px solid #fff;border-right:1px solid #696969;border-bottom:1px solid #696969;"></div>
<div style="left:1116px;top:1050px;width:1px;height:34px;background:#a0a0a0;"></div>
<div style="left:1019px;top:1083px;width:98px;height:1px;background:#a0a0a0;"></div>
<span id="t103" class="t " style="top:1064.0px;font-size:12px;line-height:24px;height:24px;left:1020.5px;transform-origin:0 0;transform:scaleX(0.9287);">Ресурсный расчет</span>
<div style="left:1118px;top:1049px;width:100px;height:36px;background:#f0f0f0;box-sizing:border-box;border-top:1px solid #fff;border-left:1px solid #fff;border-right:1px solid #696969;border-bottom:1px solid #696969;"></div>
<div style="left:1216px;top:1050px;width:1px;height:34px;background:#a0a0a0;"></div>
<div style="left:1119px;top:1083px;width:98px;height:1px;background:#a0a0a0;"></div>
<span id="t104" class="t " style="top:1064.0px;font-size:12px;line-height:24px;height:24px;left:1133.0px;transform-origin:0 0;transform:scaleX(0.9203);">Справка КС-3</span>
<div style="left:1746px;top:154px;width:1px;height:892px;background:#a0a0a0;"></div>
<div style="left:1747px;top:154px;width:1px;height:892px;background:#fff;"></div>
<div style="left:1px;top:1092px;width:1753px;height:1px;background:#fff;"></div>
<div style="left:1px;top:1093px;width:1753px;height:1px;background:#fff;"></div>
<div style="left:1px;top:1092px;width:1px;height:31px;background:#fff;"></div>
<div style="left:2px;top:1092px;width:1px;height:31px;background:#fff;"></div>
<div style="left:4px;top:1095px;width:85px;height:27px;box-sizing:border-box;border-top:1px solid #a0a0a0;border-left:1px solid #a0a0a0;border-right:1px solid #fff;border-bottom:1px solid #fff;"></div>
<div style="left:92px;top:1095px;width:299px;height:27px;box-sizing:border-box;border-top:1px solid #a0a0a0;border-left:1px solid #a0a0a0;border-right:1px solid #fff;border-bottom:1px solid #fff;"></div>
<div style="left:394px;top:1095px;width:1289px;height:27px;box-sizing:border-box;border-top:1px solid #a0a0a0;border-left:1px solid #a0a0a0;border-right:1px solid #fff;border-bottom:1px solid #fff;"></div>
<div style="left:1686px;top:1095px;width:31px;height:27px;box-sizing:border-box;border-top:1px solid #a0a0a0;border-left:1px solid #a0a0a0;border-right:1px solid #fff;border-bottom:1px solid #fff;"></div>
<div style="left:1720px;top:1095px;width:31px;height:27px;box-sizing:border-box;border-top:1px solid #a0a0a0;border-left:1px solid #a0a0a0;border-right:1px solid #fff;border-bottom:1px solid #fff;"></div>
<div style="left:89px;top:1094px;width:3px;height:28px;background:#fff;"></div>
<div style="left:391px;top:1094px;width:3px;height:28px;background:#fff;"></div>
<div style="left:1683px;top:1094px;width:3px;height:28px;background:#fff;"></div>
<div style="left:1717px;top:1094px;width:3px;height:28px;background:#fff;"></div>
<div style="left:2px;top:1122px;width:1753px;height:1px;background:#909090;"></div>
<div style="left:1px;top:1123px;width:1753px;height:1px;background:#fff;"></div>
<div style="left:0px;top:1124px;width:1753px;height:1px;background:#a0a0a0;"></div>
<svg style="left:1693px;top:1100px" width="16" height="16" viewBox="0 0 16 16"><circle cx="8" cy="8" r="8" fill="#0078d7"/><rect x="7" y="6.6" width="2" height="6" fill="#fff"/><circle cx="8" cy="4" r="1.3" fill="#fff"/></svg>
<span id="t105" class="t " style="top:1096.0px;font-size:12px;line-height:24px;height:24px;left:1726.5px;transform-origin:0 0;transform:scaleX(0.9225);">RU</span>
<svg style="left:26px;top:156.5px" width="16" height="16" viewBox="0 0 16 16"><path d="M5.500 0.500L0.300 12h11z" fill="#2868c8"/><path d="M5.500 2L2 10.500h5z" fill="#68a0e8"/><rect x="9" y="5.500" width="6.800" height="6.500" fill="#78c020" stroke="#5a9a10" stroke-width=".600"/><circle cx="7" cy="9.500" r="3.600" fill="#f03818"/><circle cx="6" cy="8.300" r="1.300" fill="#ff9a80"/></svg>
<svg style="left:46px;top:172px" width="16" height="16" viewBox="0 0 16 16"><rect x="0" y="6" width="4.500" height="9.500" fill="#2f72d8"/><rect x="5" y="3" width="5" height="12.500" fill="#2f72d8"/><rect x="10.500" y="7" width="4.500" height="8.500" fill="#2f72d8"/><path d="M1 8.500h2.500M1 10.500h2.500M1 12.500h2.500M6 5.500h3M6 7.500h3M6 9.500h3M6 11.500h3M6 13.500h3M11.500 9.500h2.500M11.500 11.500h2.500M11.500 13.500h2.500" stroke="#a8c8f8" stroke-width="1"/><path d="M0 15.500h15" stroke="#1e5cc0"/><path d="M5.500 0v3" stroke="#303030" stroke-width=".800"/><path d="M5.800 0l3.600 1.300-3.600 1.200z" fill="#e82020"/></svg>
<svg style="left:65px;top:187px" width="16" height="16" viewBox="0 0 16 16"><rect x="0.5" y="1.5" width="3" height="13" fill="#fff" stroke="#8c8c8c"/><path d="M1 4.5h2M1 7.5h2M1 10.5h2" stroke="#8c8c8c"/><path d="M0.5 1.5h11" stroke="#8c8c8c"/><path d="M3.5 14.5h3" stroke="#8c8c8c"/><path d="M8 2L4 9h9z" fill="#9370db"/><path d="M11.5 0.5v8l3 1V4.5z" fill="#7b68ee"/><path d="M8.5 1.2L4 9M8.5 1.2L13 9" stroke="#8b2a2a" stroke-width=".8" fill="none"/><rect x="3.5" y="8.2" width="11.5" height="2.2" fill="#e8690b"/><rect x="3.5" y="8.2" width="11.5" height=".8" fill="#ffa040"/><rect x="6.5" y="11" width="3.5" height="5" fill="#1e90ff"/><rect x="11" y="11" width="4.5" height="5" fill="#1e90ff"/><path d="M6.5 12.5h9M6.5 14.5h9M8 11v5M12.5 11v5M14 11v5" stroke="#bfe0ff" stroke-width=".6"/><circle cx="1.5" cy="1" r="1" fill="#9370db"/></svg>
<svg style="left:82.5px;top:203.5px" width="16" height="16" viewBox="0 0 16 16"><g transform="translate(-0.800,-0.800) scale(1.120,1.120)"><path d="M1 9.5L6.5 2.5L15 5.5L10.5 13z" fill="#2e8b57"/><path d="M1 9.5L6.5 2.5L15 5.5L10.5 13z" fill="none" stroke="#257a4a" stroke-width=".8"/><path d="M6.8 5.2l4.6 1.5" stroke="#dff5e8" stroke-width="1.3"/><path d="M1 9.5l9.5 3.5L15 5.5v2.8l-4.4 6.2L1 11.5z" fill="#d9dde0"/><path d="M1 10.6l9.5 3.4L15 7M1 11.5l9.6 3L15 8.3" stroke="#a9b0b5" stroke-width=".6" fill="none"/></g></svg>
<svg style="left:82.5px;top:219.5px" width="16" height="16" viewBox="0 0 16 16"><g transform="translate(-0.800,-0.800) scale(1.120,1.120)"><path d="M1 9.5L6.5 2.5L15 5.5L10.5 13z" fill="#2e8b57"/><path d="M1 9.5L6.5 2.5L15 5.5L10.5 13z" fill="none" stroke="#257a4a" stroke-width=".8"/><path d="M6.8 5.2l4.6 1.5" stroke="#dff5e8" stroke-width="1.3"/><path d="M1 9.5l9.5 3.5L15 5.5v2.8l-4.4 6.2L1 11.5z" fill="#d9dde0"/><path d="M1 10.6l9.5 3.4L15 7M1 11.5l9.6 3L15 8.3" stroke="#a9b0b5" stroke-width=".6" fill="none"/></g></svg>
<svg style="left:65px;top:235px" width="16" height="16" viewBox="0 0 16 16"><rect x="0.5" y="1.5" width="3" height="13" fill="#fff" stroke="#8c8c8c"/><path d="M1 4.5h2M1 7.5h2M1 10.5h2" stroke="#8c8c8c"/><path d="M0.5 1.5h11" stroke="#8c8c8c"/><path d="M3.5 14.5h3" stroke="#8c8c8c"/><path d="M8 2L4 9h9z" fill="#9370db"/><path d="M11.5 0.5v8l3 1V4.5z" fill="#7b68ee"/><path d="M8.5 1.2L4 9M8.5 1.2L13 9" stroke="#8b2a2a" stroke-width=".8" fill="none"/><rect x="3.5" y="8.2" width="11.5" height="2.2" fill="#e8690b"/><rect x="3.5" y="8.2" width="11.5" height=".8" fill="#ffa040"/><rect x="6.5" y="11" width="3.5" height="5" fill="#1e90ff"/><rect x="11" y="11" width="4.5" height="5" fill="#1e90ff"/><path d="M6.5 12.5h9M6.5 14.5h9M8 11v5M12.5 11v5M14 11v5" stroke="#bfe0ff" stroke-width=".6"/><circle cx="1.5" cy="1" r="1" fill="#9370db"/></svg>
<svg style="left:65px;top:251px" width="16" height="16" viewBox="0 0 16 16"><rect x="0.5" y="1.5" width="3" height="13" fill="#fff" stroke="#8c8c8c"/><path d="M1 4.5h2M1 7.5h2M1 10.5h2" stroke="#8c8c8c"/><path d="M0.5 1.5h11" stroke="#8c8c8c"/><path d="M3.5 14.5h3" stroke="#8c8c8c"/><path d="M8 2L4 9h9z" fill="#9370db"/><path d="M11.5 0.5v8l3 1V4.5z" fill="#7b68ee"/><path d="M8.5 1.2L4 9M8.5 1.2L13 9" stroke="#8b2a2a" stroke-width=".8" fill="none"/><rect x="3.5" y="8.2" width="11.5" height="2.2" fill="#e8690b"/><rect x="3.5" y="8.2" width="11.5" height=".8" fill="#ffa040"/><rect x="6.5" y="11" width="3.5" height="5" fill="#1e90ff"/><rect x="11" y="11" width="4.5" height="5" fill="#1e90ff"/><path d="M6.5 12.5h9M6.5 14.5h9M8 11v5M12.5 11v5M14 11v5" stroke="#bfe0ff" stroke-width=".6"/><circle cx="1.5" cy="1" r="1" fill="#9370db"/></svg>
<svg style="left:45px;top:268.5px" width="16" height="16" viewBox="0 0 16 16"><defs><linearGradient id="fg1" x1="0" y1="1" x2="1" y2="0"><stop offset="0" stop-color="#fff000"/><stop offset=".450" stop-color="#ffd800"/><stop offset="1" stop-color="#ff8c00"/></linearGradient></defs><path d="M0.500 0.500h6l1 1.500h8v11.500h-15z" fill="url(#fg1)" stroke="#9a9a9a"/><path d="M1 1h5" stroke="#ffc040"/></svg>
<svg style="left:44px;top:283px" width="16" height="16" viewBox="0 0 16 16"><path d="M3.500 0.500h4l1 1.200h5.500v8h-10.500z" fill="#ffe060" stroke="#c8a020" stroke-width=".800"/><path d="M4 3h9.500v6h-9.500z" fill="#fff0a0"/><path d="M0 6.500c2 1 3 3 5 3.500l7-.5 3-1.500v3l-4 2.500h-5c-3-1-4.500-3.500-6-7z" fill="#f0a060"/><path d="M5 10l6.500-1" stroke="#c87030" stroke-width=".800"/><path d="M15.500 5.500v8" stroke="#404040" stroke-width="1"/></svg>
<svg style="left:44px;top:299px" width="16" height="16" viewBox="0 0 16 16"><path d="M5.500 3a2.500 2.500 0 0 1 5 0z" fill="#e0e8f0" stroke="#a0a8b0" stroke-width=".600"/><path d="M4.500 3.500h7l-.5 11h-6z" fill="#607080"/><path d="M3.500 6.500h9M4 14.800h8" stroke="#404850" stroke-width="1.300"/><path d="M5.500 4v10.500M7 4v10.500M8.500 4v10.500M10 4v10.500M4.500 5h7M4.500 8.500h7M4.500 10h7M4.500 11.500h7M4.500 13h7" stroke="#c0c8d0" stroke-width=".500"/></svg>
<svg style="left:521.5px;top:175.5px" width="16" height="14" viewBox="0 0 16 14"><defs><linearGradient id="lf" x1="0" y1="1" x2="1" y2="0"><stop offset="0" stop-color="#78ffff"/><stop offset=".500" stop-color="#28b4ff"/><stop offset="1" stop-color="#0078f8"/></linearGradient></defs><path d="M0.500 0.500h7l1 2h7v11h-15z" fill="url(#lf)" stroke="#b4a898" stroke-width=".800"/><path d="M1 2.500h7.500" stroke="#b4a898" stroke-width=".600"/></svg>
<svg style="left:521.5px;top:192.5px" width="16" height="14" viewBox="0 0 16 14"><defs><linearGradient id="lf" x1="0" y1="1" x2="1" y2="0"><stop offset="0" stop-color="#78ffff"/><stop offset=".500" stop-color="#28b4ff"/><stop offset="1" stop-color="#0078f8"/></linearGradient></defs><path d="M0.500 0.500h7l1 2h7v11h-15z" fill="url(#lf)" stroke="#b4a898" stroke-width=".800"/><path d="M1 2.500h7.500" stroke="#b4a898" stroke-width=".600"/></svg>
<svg style="left:521.5px;top:209.5px" width="16" height="14" viewBox="0 0 16 14"><defs><linearGradient id="lf" x1="0" y1="1" x2="1" y2="0"><stop offset="0" stop-color="#78ffff"/><stop offset=".500" stop-color="#28b4ff"/><stop offset="1" stop-color="#0078f8"/></linearGradient></defs><path d="M0.500 0.500h7l1 2h7v11h-15z" fill="url(#lf)" stroke="#b4a898" stroke-width=".800"/><path d="M1 2.500h7.500" stroke="#b4a898" stroke-width=".600"/></svg>
<svg style="left:521.5px;top:226.5px" width="16" height="14" viewBox="0 0 16 14"><defs><linearGradient id="lf" x1="0" y1="1" x2="1" y2="0"><stop offset="0" stop-color="#78ffff"/><stop offset=".500" stop-color="#28b4ff"/><stop offset="1" stop-color="#0078f8"/></linearGradient></defs><path d="M0.500 0.500h7l1 2h7v11h-15z" fill="url(#lf)" stroke="#b4a898" stroke-width=".800"/><path d="M1 2.500h7.500" stroke="#b4a898" stroke-width=".600"/></svg>
<svg style="left:521.5px;top:243.5px" width="16" height="14" viewBox="0 0 16 14"><defs><linearGradient id="lf" x1="0" y1="1" x2="1" y2="0"><stop offset="0" stop-color="#78ffff"/><stop offset=".500" stop-color="#28b4ff"/><stop offset="1" stop-color="#0078f8"/></linearGradient></defs><path d="M0.500 0.500h7l1 2h7v11h-15z" fill="url(#lf)" stroke="#b4a898" stroke-width=".800"/><path d="M1 2.500h7.500" stroke="#b4a898" stroke-width=".600"/></svg>
<svg style="left:521.5px;top:260.5px" width="16" height="14" viewBox="0 0 16 14"><defs><linearGradient id="lf" x1="0" y1="1" x2="1" y2="0"><stop offset="0" stop-color="#78ffff"/><stop offset=".500" stop-color="#28b4ff"/><stop offset="1" stop-color="#0078f8"/></linearGradient></defs><path d="M0.500 0.500h7l1 2h7v11h-15z" fill="url(#lf)" stroke="#b4a898" stroke-width=".800"/><path d="M1 2.500h7.500" stroke="#b4a898" stroke-width=".600"/></svg>
<svg style="left:560px;top:1053px" width="16" height="16" viewBox="0 0 16 16"><rect x="3.500" y="0.500" width="8" height="14" fill="#58e020" stroke="#8c8c8c"/><rect x="0.500" y="4.500" width="3" height="10" fill="#f8f060" stroke="#8c8c8c"/><rect x="6.500" y="8.500" width="8" height="6" fill="#58e020" stroke="#8c8c8c"/><path d="M5.500 2.500h5M5.500 4.500h5M5.500 6.500h5M4.500 9h2M4.500 11h2M4.500 13h2M8 10.500h5.500M8 12.500h5.500" stroke="#2068e8" stroke-width="1" stroke-dasharray="1 1.500"/></svg>
<svg style="left:660px;top:1053px" width="16" height="16" viewBox="0 0 16 16"><rect x="0.500" y="0.500" width="15" height="14" fill="#fafafa" stroke="#c0c0c0"/><text x="2.500" y="12.300" font-size="13" font-family="Liberation Sans,sans-serif" fill="#303030" textLength="11" lengthAdjust="spacingAndGlyphs">%</text></svg>
<svg style="left:760px;top:1053px" width="16" height="16" viewBox="0 0 16 16"><rect x="0.500" y="3.500" width="3" height="11" fill="#f8f060" stroke="#8c8c8c"/><rect x="3.500" y="10.500" width="11" height="4" fill="#58e020" stroke="#8c8c8c"/><path d="M5 12.500h9" stroke="#2068e8" stroke-dasharray="1 1.500"/><path d="M4 0.500v9" stroke="#8c8c8c"/><text x="10" y="8.500" font-size="9" font-family="Liberation Sans,sans-serif" fill="#303030" text-anchor="middle">%</text></svg>
<svg style="left:860px;top:1053px" width="16" height="16" viewBox="0 0 16 16"><rect x="0" y="0" width="16" height="13.500" fill="#d8ecf8"/><text x="1.0" y="12.300" font-size="12.500" font-family="Liberation Sans,sans-serif" fill="#303030" textLength="14" lengthAdjust="spacingAndGlyphs">КС-6</text><path d="M0.500 13.500h15" stroke="#808080" stroke-width=".800"/></svg>
<svg style="left:960px;top:1053px" width="16" height="16" viewBox="0 0 16 16"><rect x="0" y="0" width="16" height="13.500" fill="#dcf4d8"/><text x="1.0" y="12.300" font-size="12.500" font-family="Liberation Sans,sans-serif" fill="#303030" textLength="14" lengthAdjust="spacingAndGlyphs">М29</text><path d="M0.500 13.500h15" stroke="#808080" stroke-width=".800"/></svg>
<svg style="left:1060px;top:1053px" width="16" height="16" viewBox="0 0 16 16"><rect x="0.500" y="0.500" width="15" height="14" fill="#eef2fa" stroke="#c8c8c8"/><text x="3" y="12.300" font-size="12" font-family="Liberation Sans,sans-serif" fill="#303030" textLength="10" lengthAdjust="spacingAndGlyphs">РР</text></svg>
<svg style="left:1160px;top:1053px" width="16" height="16" viewBox="0 0 16 16"><rect x="0" y="0" width="16" height="13.500" fill="#fbe0d8"/><text x="1.0" y="12.300" font-size="12.500" font-family="Liberation Sans,sans-serif" fill="#303030" textLength="14" lengthAdjust="spacingAndGlyphs">КС-3</text><path d="M0.500 13.500h15" stroke="#808080" stroke-width=".800"/></svg>
<svg style="left:524px;top:606px" width="32" height="33" viewBox="0 0 32 33"><defs><linearGradient id="cab" x1="0" y1="0" x2="1" y2="0"><stop offset="0" stop-color="#d4d8dc"/><stop offset=".600" stop-color="#b4bac0"/><stop offset="1" stop-color="#8c949c"/></linearGradient>
<linearGradient id="cy" x1="0" y1="0" x2="0" y2="1"><stop offset="0" stop-color="#ffe020"/><stop offset=".500" stop-color="#ffc010"/><stop offset="1" stop-color="#ffe800"/></linearGradient>
<linearGradient id="cb" x1="0" y1="0" x2="0" y2="1"><stop offset="0" stop-color="#60e0ff"/><stop offset=".500" stop-color="#28b8f0"/><stop offset="1" stop-color="#10e8ff"/></linearGradient>
<linearGradient id="cg" x1="0" y1="0" x2="0" y2="1"><stop offset="0" stop-color="#48b828"/><stop offset="1" stop-color="#a0e890"/></linearGradient></defs>
<path d="M0.300 25l8.600 7.500 17-2.500v-2z" fill="#d8d8c8" opacity=".700"/>
<path d="M1.100 1.700L16.800 1.300 26.700 4.200 8.900 4.900z" fill="#d0d4d8"/>
<path d="M1.100 1.700L8.200 4.500 8.900 31.600 0.800 24.100z" fill="url(#cab)"/>
<path d="M9.600 13.800L26.700 13.100 27.800 17 13.900 18.800V24.400L9.600 23.700z" fill="#a8aeb4"/>
<path d="M13.900 18.800L17 16 27.800 15.500 31 17z" fill="#d8dce0"/>
<path d="M9.300 5.200L26.700 4.200V12.400L9.600 13.800z" fill="url(#cy)"/>
<path d="M15.300 9.600L21.700 9.100" stroke="#fff8e0" stroke-width="1.400"/><path d="M15.300 10.400L21.700 9.900" stroke="#c89000" stroke-width=".500"/>
<path d="M9.300 24.100L15.300 26.600 25.600 26.200V29.800L9.300 31.600z" fill="url(#cg)"/>
<path d="M14.300 18.800L31 17V24.400L15 26.600z" fill="url(#cb)"/>
<path d="M19.600 22.300L26.700 21.600" stroke="#f0fcff" stroke-width="1.400"/><path d="M19.600 23.100L26.700 22.400" stroke="#2090c0" stroke-width=".500"/></svg>
<svg style="left:524px;top:713px" width="33" height="32" viewBox="0 0 33 32"><path d="M0 28.400L4.700 26.600 31.700 25.200 24.900 31.900 11.800 30.100z" fill="#a89898" opacity=".850"/>
<rect x="9.300" y="2.200" width="4.100" height="7" fill="#aca4ac"/>
<path d="M4.700 15.900L12.500 7 22.100 17.300 22.400 29 5 26.900z" fill="#ecdcb0"/>
<path d="M22.100 17.300L28.100 14.500 27.800 25.200 22.400 29z" fill="#dcc894"/>
<path d="M12.500 5.200L20.300 4.200 27.100 5.600 29.900 14.500 22.400 17.700z" fill="#f04848"/>
<path d="M12.500 5.200L14.500 5 24 16.500 22.400 17.700z" fill="#f88888"/>
<path d="M2.200 16.300L12.100 5.600" stroke="#f04848" stroke-width="1.700"/>
<path d="M21.700 12.300L25.200 11 27 12.800 24.300 14.700z" fill="#fff8e8"/><path d="M25.100 11L27.400 8 28 10.500 27 12.800z" fill="#f8f0e0"/><rect x="25.300" y="11.500" width=".900" height="2.600" fill="#a8e0f8"/>
<rect x="7.200" y="17.300" width="4.600" height="9.600" fill="#b8dcf0"/><rect x="10" y="18.300" width="1.800" height="8.600" fill="#70787c"/><rect x="8" y="18.300" width="1.800" height="8.600" fill="#e8f0f0"/>
<rect x="15.300" y="18" width="3.600" height="6.100" fill="#80d8ff"/><path d="M15.300 20.500h3.600" stroke="#a8e4ff" stroke-width=".600"/>
<rect x="25.100" y="17" width=".900" height="5.700" fill="#a8e0f8"/></svg>
<svg style="left:1615px;top:714px" width="26" height="30" viewBox="0 0 26 30"><defs><linearGradient id="coin" x1="0" y1="0" x2="1" y2="0"><stop offset="0" stop-color="#f8b810"/><stop offset=".600" stop-color="#fffbe8"/><stop offset="1" stop-color="#f8c428"/></linearGradient></defs>
<rect x="3.500" y="1.500" width="19" height="26" rx="1" fill="#e4dcd4" stroke="#b8909c" stroke-width=".800"/><rect x="4" y="2" width="18" height="2.300" fill="#f2ead4"/>
<rect x="3.500" y="4.500" width="19" height="5.500" fill="#28b4c4" stroke="#4c7ca4" stroke-width=".800"/><path d="M6 5.800v3M7.800 5.800v3M9.600 5.800v3M11.400 5.800v3" stroke="#103038" stroke-width="1.200" stroke-dasharray="1.200 .500"/>
<g fill="#fff"><rect x="5.700" y="11.100" width="2.100" height="2"/><rect x="9.800" y="11.100" width="2.100" height="2"/><rect x="13.900" y="11.100" width="2.100" height="2"/><rect x="18" y="11.100" width="2.100" height="2"/>
<rect x="5.700" y="15" width="2.100" height="2"/><rect x="9.800" y="15" width="2.100" height="2"/><rect x="13.900" y="15" width="2.100" height="2"/><rect x="18" y="15" width="2.100" height="2"/></g>
<g fill="#ffffc8"><rect x="5.700" y="18.900" width="2.100" height="2"/><rect x="9.800" y="18.900" width="2.100" height="2"/><rect x="13.900" y="18.900" width="2.100" height="2"/><rect x="9.800" y="22.800" width="2.100" height="2"/><rect x="13.900" y="22.800" width="2.100" height="2"/></g>
<g fill="url(#coin)" stroke="#806000" stroke-width=".900"><rect x="0.600" y="22.300" width="8.800" height="3" rx="1"/><rect x="0.600" y="25.700" width="8.800" height="3" rx="1"/><rect x="15.600" y="19.400" width="9" height="2.900" rx="1"/><rect x="15.600" y="22.600" width="9" height="2.900" rx="1"/><rect x="15.600" y="25.800" width="9" height="2.900" rx="1"/></g></svg>
<svg style="left:0;top:0;pointer-events:none" width="1753" height="1125" viewBox="0 0 1753 1125"><rect x="80.5" y="203" width="155" height="15" fill="none" stroke="#ff0000" stroke-width="3"/><rect x="518" y="1048" width="97" height="37.5" fill="none" stroke="#ff0000" stroke-width="3"/><line x1="236.5" y1="207" x2="559" y2="1028" stroke="#ff0000" stroke-width="3.300"/><path d="M551.2 1029.5 L565.8 1023.8 L566.8 1046.8 Z" fill="#ff0000"/></svg>
</body></html>
